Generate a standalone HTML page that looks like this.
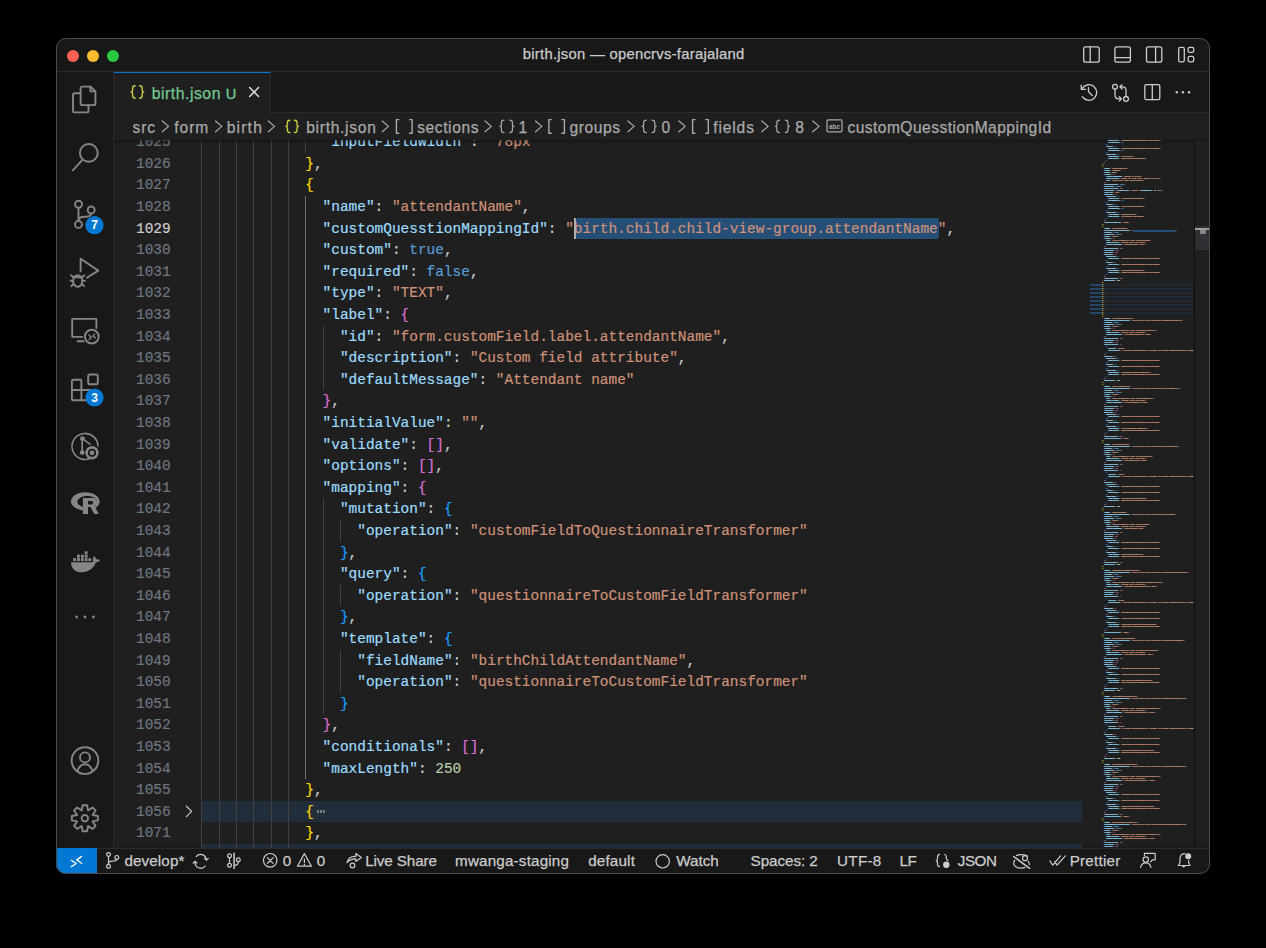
<!DOCTYPE html>
<html><head><meta charset="utf-8">
<style>
*{box-sizing:border-box;margin:0;padding:0}
html,body{width:1266px;height:948px;background:#000;overflow:hidden}
body{position:relative;font-family:"Liberation Sans",sans-serif}
.abs{position:absolute}
#win{position:absolute;left:56px;top:38px;width:1154px;height:836px;background:#181818;border-radius:10px;overflow:hidden;}
#winborder{position:absolute;left:56px;top:38px;width:1154px;height:836px;border-radius:10px;border:1px solid #4b4b4b;pointer-events:none}
#title{position:absolute;left:0;top:0;width:1154px;height:33.5px;background:#181818;border-bottom:1px solid #2b2b2b}
.tl{position:absolute;top:11.8px;width:12.4px;height:12.4px;border-radius:50%}
#act{position:absolute;left:0;top:33.5px;width:57.5px;height:776px;background:#181818;border-right:1px solid #2b2b2b}
#tabs{position:absolute;left:57.5px;top:33.5px;width:1096.5px;height:41.5px;background:#181818;border-bottom:1px solid #2b2b2b}
#tab{position:absolute;left:0;top:0;width:157.5px;height:41.5px;background:#1f1f1f;border-right:1px solid #2b2b2b;border-top:1.3px solid #0078d4}
#editor{position:absolute;left:57.5px;top:75px;width:1096.5px;height:734px;background:#1f1f1f}
#status{position:absolute;left:0;top:809.5px;width:1154px;height:26.5px;background:#181818;border-top:1px solid #2b2b2b}
#page{position:absolute;left:0;top:0;width:1266px;height:948px}
.ln{position:absolute;height:21.6px;line-height:22.6px;-webkit-text-stroke:0.2px currentColor;font-family:"Liberation Mono",monospace;font-size:14.45px;white-space:pre;color:#ccc}
.num{position:absolute;left:120px;width:50.7px;text-align:right;height:21.6px;line-height:22.6px;-webkit-text-stroke:0.2px currentColor;font-family:"Liberation Mono",monospace;font-size:14.45px;color:#6e7681}
.num.act{color:#cccccc}
.g{position:absolute;width:1px;height:21.6px;background:#404040}
.ga{background:#707070}
.fold{position:absolute;left:201.2px;width:881px;height:21.6px;background:#212d3a}
#clip{position:absolute;left:113.5px;top:140.4px;width:1096px;height:707.4px;overflow:hidden}
#clipin{position:absolute;left:-113.5px;top:-140.4px;width:1266px;height:948px}
svg{overflow:visible}
</style></head><body>
<div id="win">
  <div id="title">
    <div class="tl" style="left:10.8px;background:#ff5f57"></div>
    <div class="tl" style="left:30.8px;background:#febc2e"></div>
    <div class="tl" style="left:50.8px;background:#28c840"></div>
  </div>
  <div id="act"></div>
  <div id="tabs"><div id="tab"></div></div>
  <div id="editor"></div>
  <div id="status"></div>
</div>
<div id="page">
  <div id="clip"><div id="clipin">
<div class="fold" style="top:800.8px"></div>
<div class="fold" style="top:844.0px"></div>
<div class="g" style="top:131.2px;left:201.2px"></div>
<div class="g" style="top:131.2px;left:218.5px"></div>
<div class="g" style="top:131.2px;left:235.9px"></div>
<div class="g" style="top:131.2px;left:253.2px"></div>
<div class="g" style="top:131.2px;left:270.6px"></div>
<div class="g" style="top:131.2px;left:287.9px"></div>
<div class="g" style="top:131.2px;left:305.2px"></div>
<div class="g" style="top:152.8px;left:201.2px"></div>
<div class="g" style="top:152.8px;left:218.5px"></div>
<div class="g" style="top:152.8px;left:235.9px"></div>
<div class="g" style="top:152.8px;left:253.2px"></div>
<div class="g" style="top:152.8px;left:270.6px"></div>
<div class="g" style="top:152.8px;left:287.9px"></div>
<div class="g" style="top:174.4px;left:201.2px"></div>
<div class="g" style="top:174.4px;left:218.5px"></div>
<div class="g" style="top:174.4px;left:235.9px"></div>
<div class="g" style="top:174.4px;left:253.2px"></div>
<div class="g" style="top:174.4px;left:270.6px"></div>
<div class="g" style="top:174.4px;left:287.9px"></div>
<div class="g" style="top:196.0px;left:201.2px"></div>
<div class="g" style="top:196.0px;left:218.5px"></div>
<div class="g" style="top:196.0px;left:235.9px"></div>
<div class="g" style="top:196.0px;left:253.2px"></div>
<div class="g" style="top:196.0px;left:270.6px"></div>
<div class="g" style="top:196.0px;left:287.9px"></div>
<div class="g ga" style="top:196.0px;left:305.2px"></div>
<div class="g" style="top:217.6px;left:201.2px"></div>
<div class="g" style="top:217.6px;left:218.5px"></div>
<div class="g" style="top:217.6px;left:235.9px"></div>
<div class="g" style="top:217.6px;left:253.2px"></div>
<div class="g" style="top:217.6px;left:270.6px"></div>
<div class="g" style="top:217.6px;left:287.9px"></div>
<div class="g ga" style="top:217.6px;left:305.2px"></div>
<div class="g" style="top:239.2px;left:201.2px"></div>
<div class="g" style="top:239.2px;left:218.5px"></div>
<div class="g" style="top:239.2px;left:235.9px"></div>
<div class="g" style="top:239.2px;left:253.2px"></div>
<div class="g" style="top:239.2px;left:270.6px"></div>
<div class="g" style="top:239.2px;left:287.9px"></div>
<div class="g ga" style="top:239.2px;left:305.2px"></div>
<div class="g" style="top:260.8px;left:201.2px"></div>
<div class="g" style="top:260.8px;left:218.5px"></div>
<div class="g" style="top:260.8px;left:235.9px"></div>
<div class="g" style="top:260.8px;left:253.2px"></div>
<div class="g" style="top:260.8px;left:270.6px"></div>
<div class="g" style="top:260.8px;left:287.9px"></div>
<div class="g ga" style="top:260.8px;left:305.2px"></div>
<div class="g" style="top:282.4px;left:201.2px"></div>
<div class="g" style="top:282.4px;left:218.5px"></div>
<div class="g" style="top:282.4px;left:235.9px"></div>
<div class="g" style="top:282.4px;left:253.2px"></div>
<div class="g" style="top:282.4px;left:270.6px"></div>
<div class="g" style="top:282.4px;left:287.9px"></div>
<div class="g ga" style="top:282.4px;left:305.2px"></div>
<div class="g" style="top:304.0px;left:201.2px"></div>
<div class="g" style="top:304.0px;left:218.5px"></div>
<div class="g" style="top:304.0px;left:235.9px"></div>
<div class="g" style="top:304.0px;left:253.2px"></div>
<div class="g" style="top:304.0px;left:270.6px"></div>
<div class="g" style="top:304.0px;left:287.9px"></div>
<div class="g ga" style="top:304.0px;left:305.2px"></div>
<div class="g" style="top:325.6px;left:201.2px"></div>
<div class="g" style="top:325.6px;left:218.5px"></div>
<div class="g" style="top:325.6px;left:235.9px"></div>
<div class="g" style="top:325.6px;left:253.2px"></div>
<div class="g" style="top:325.6px;left:270.6px"></div>
<div class="g" style="top:325.6px;left:287.9px"></div>
<div class="g ga" style="top:325.6px;left:305.2px"></div>
<div class="g" style="top:325.6px;left:322.6px"></div>
<div class="g" style="top:347.2px;left:201.2px"></div>
<div class="g" style="top:347.2px;left:218.5px"></div>
<div class="g" style="top:347.2px;left:235.9px"></div>
<div class="g" style="top:347.2px;left:253.2px"></div>
<div class="g" style="top:347.2px;left:270.6px"></div>
<div class="g" style="top:347.2px;left:287.9px"></div>
<div class="g ga" style="top:347.2px;left:305.2px"></div>
<div class="g" style="top:347.2px;left:322.6px"></div>
<div class="g" style="top:368.8px;left:201.2px"></div>
<div class="g" style="top:368.8px;left:218.5px"></div>
<div class="g" style="top:368.8px;left:235.9px"></div>
<div class="g" style="top:368.8px;left:253.2px"></div>
<div class="g" style="top:368.8px;left:270.6px"></div>
<div class="g" style="top:368.8px;left:287.9px"></div>
<div class="g ga" style="top:368.8px;left:305.2px"></div>
<div class="g" style="top:368.8px;left:322.6px"></div>
<div class="g" style="top:390.4px;left:201.2px"></div>
<div class="g" style="top:390.4px;left:218.5px"></div>
<div class="g" style="top:390.4px;left:235.9px"></div>
<div class="g" style="top:390.4px;left:253.2px"></div>
<div class="g" style="top:390.4px;left:270.6px"></div>
<div class="g" style="top:390.4px;left:287.9px"></div>
<div class="g ga" style="top:390.4px;left:305.2px"></div>
<div class="g" style="top:412.0px;left:201.2px"></div>
<div class="g" style="top:412.0px;left:218.5px"></div>
<div class="g" style="top:412.0px;left:235.9px"></div>
<div class="g" style="top:412.0px;left:253.2px"></div>
<div class="g" style="top:412.0px;left:270.6px"></div>
<div class="g" style="top:412.0px;left:287.9px"></div>
<div class="g ga" style="top:412.0px;left:305.2px"></div>
<div class="g" style="top:433.6px;left:201.2px"></div>
<div class="g" style="top:433.6px;left:218.5px"></div>
<div class="g" style="top:433.6px;left:235.9px"></div>
<div class="g" style="top:433.6px;left:253.2px"></div>
<div class="g" style="top:433.6px;left:270.6px"></div>
<div class="g" style="top:433.6px;left:287.9px"></div>
<div class="g ga" style="top:433.6px;left:305.2px"></div>
<div class="g" style="top:455.2px;left:201.2px"></div>
<div class="g" style="top:455.2px;left:218.5px"></div>
<div class="g" style="top:455.2px;left:235.9px"></div>
<div class="g" style="top:455.2px;left:253.2px"></div>
<div class="g" style="top:455.2px;left:270.6px"></div>
<div class="g" style="top:455.2px;left:287.9px"></div>
<div class="g ga" style="top:455.2px;left:305.2px"></div>
<div class="g" style="top:476.8px;left:201.2px"></div>
<div class="g" style="top:476.8px;left:218.5px"></div>
<div class="g" style="top:476.8px;left:235.9px"></div>
<div class="g" style="top:476.8px;left:253.2px"></div>
<div class="g" style="top:476.8px;left:270.6px"></div>
<div class="g" style="top:476.8px;left:287.9px"></div>
<div class="g ga" style="top:476.8px;left:305.2px"></div>
<div class="g" style="top:498.4px;left:201.2px"></div>
<div class="g" style="top:498.4px;left:218.5px"></div>
<div class="g" style="top:498.4px;left:235.9px"></div>
<div class="g" style="top:498.4px;left:253.2px"></div>
<div class="g" style="top:498.4px;left:270.6px"></div>
<div class="g" style="top:498.4px;left:287.9px"></div>
<div class="g ga" style="top:498.4px;left:305.2px"></div>
<div class="g" style="top:498.4px;left:322.6px"></div>
<div class="g" style="top:520.0px;left:201.2px"></div>
<div class="g" style="top:520.0px;left:218.5px"></div>
<div class="g" style="top:520.0px;left:235.9px"></div>
<div class="g" style="top:520.0px;left:253.2px"></div>
<div class="g" style="top:520.0px;left:270.6px"></div>
<div class="g" style="top:520.0px;left:287.9px"></div>
<div class="g ga" style="top:520.0px;left:305.2px"></div>
<div class="g" style="top:520.0px;left:322.6px"></div>
<div class="g" style="top:520.0px;left:339.9px"></div>
<div class="g" style="top:541.6px;left:201.2px"></div>
<div class="g" style="top:541.6px;left:218.5px"></div>
<div class="g" style="top:541.6px;left:235.9px"></div>
<div class="g" style="top:541.6px;left:253.2px"></div>
<div class="g" style="top:541.6px;left:270.6px"></div>
<div class="g" style="top:541.6px;left:287.9px"></div>
<div class="g ga" style="top:541.6px;left:305.2px"></div>
<div class="g" style="top:541.6px;left:322.6px"></div>
<div class="g" style="top:563.2px;left:201.2px"></div>
<div class="g" style="top:563.2px;left:218.5px"></div>
<div class="g" style="top:563.2px;left:235.9px"></div>
<div class="g" style="top:563.2px;left:253.2px"></div>
<div class="g" style="top:563.2px;left:270.6px"></div>
<div class="g" style="top:563.2px;left:287.9px"></div>
<div class="g ga" style="top:563.2px;left:305.2px"></div>
<div class="g" style="top:563.2px;left:322.6px"></div>
<div class="g" style="top:584.8px;left:201.2px"></div>
<div class="g" style="top:584.8px;left:218.5px"></div>
<div class="g" style="top:584.8px;left:235.9px"></div>
<div class="g" style="top:584.8px;left:253.2px"></div>
<div class="g" style="top:584.8px;left:270.6px"></div>
<div class="g" style="top:584.8px;left:287.9px"></div>
<div class="g ga" style="top:584.8px;left:305.2px"></div>
<div class="g" style="top:584.8px;left:322.6px"></div>
<div class="g" style="top:584.8px;left:339.9px"></div>
<div class="g" style="top:606.4px;left:201.2px"></div>
<div class="g" style="top:606.4px;left:218.5px"></div>
<div class="g" style="top:606.4px;left:235.9px"></div>
<div class="g" style="top:606.4px;left:253.2px"></div>
<div class="g" style="top:606.4px;left:270.6px"></div>
<div class="g" style="top:606.4px;left:287.9px"></div>
<div class="g ga" style="top:606.4px;left:305.2px"></div>
<div class="g" style="top:606.4px;left:322.6px"></div>
<div class="g" style="top:628.0px;left:201.2px"></div>
<div class="g" style="top:628.0px;left:218.5px"></div>
<div class="g" style="top:628.0px;left:235.9px"></div>
<div class="g" style="top:628.0px;left:253.2px"></div>
<div class="g" style="top:628.0px;left:270.6px"></div>
<div class="g" style="top:628.0px;left:287.9px"></div>
<div class="g ga" style="top:628.0px;left:305.2px"></div>
<div class="g" style="top:628.0px;left:322.6px"></div>
<div class="g" style="top:649.6px;left:201.2px"></div>
<div class="g" style="top:649.6px;left:218.5px"></div>
<div class="g" style="top:649.6px;left:235.9px"></div>
<div class="g" style="top:649.6px;left:253.2px"></div>
<div class="g" style="top:649.6px;left:270.6px"></div>
<div class="g" style="top:649.6px;left:287.9px"></div>
<div class="g ga" style="top:649.6px;left:305.2px"></div>
<div class="g" style="top:649.6px;left:322.6px"></div>
<div class="g" style="top:649.6px;left:339.9px"></div>
<div class="g" style="top:671.2px;left:201.2px"></div>
<div class="g" style="top:671.2px;left:218.5px"></div>
<div class="g" style="top:671.2px;left:235.9px"></div>
<div class="g" style="top:671.2px;left:253.2px"></div>
<div class="g" style="top:671.2px;left:270.6px"></div>
<div class="g" style="top:671.2px;left:287.9px"></div>
<div class="g ga" style="top:671.2px;left:305.2px"></div>
<div class="g" style="top:671.2px;left:322.6px"></div>
<div class="g" style="top:671.2px;left:339.9px"></div>
<div class="g" style="top:692.8px;left:201.2px"></div>
<div class="g" style="top:692.8px;left:218.5px"></div>
<div class="g" style="top:692.8px;left:235.9px"></div>
<div class="g" style="top:692.8px;left:253.2px"></div>
<div class="g" style="top:692.8px;left:270.6px"></div>
<div class="g" style="top:692.8px;left:287.9px"></div>
<div class="g ga" style="top:692.8px;left:305.2px"></div>
<div class="g" style="top:692.8px;left:322.6px"></div>
<div class="g" style="top:714.4px;left:201.2px"></div>
<div class="g" style="top:714.4px;left:218.5px"></div>
<div class="g" style="top:714.4px;left:235.9px"></div>
<div class="g" style="top:714.4px;left:253.2px"></div>
<div class="g" style="top:714.4px;left:270.6px"></div>
<div class="g" style="top:714.4px;left:287.9px"></div>
<div class="g ga" style="top:714.4px;left:305.2px"></div>
<div class="g" style="top:736.0px;left:201.2px"></div>
<div class="g" style="top:736.0px;left:218.5px"></div>
<div class="g" style="top:736.0px;left:235.9px"></div>
<div class="g" style="top:736.0px;left:253.2px"></div>
<div class="g" style="top:736.0px;left:270.6px"></div>
<div class="g" style="top:736.0px;left:287.9px"></div>
<div class="g ga" style="top:736.0px;left:305.2px"></div>
<div class="g" style="top:757.6px;left:201.2px"></div>
<div class="g" style="top:757.6px;left:218.5px"></div>
<div class="g" style="top:757.6px;left:235.9px"></div>
<div class="g" style="top:757.6px;left:253.2px"></div>
<div class="g" style="top:757.6px;left:270.6px"></div>
<div class="g" style="top:757.6px;left:287.9px"></div>
<div class="g ga" style="top:757.6px;left:305.2px"></div>
<div class="g" style="top:779.2px;left:201.2px"></div>
<div class="g" style="top:779.2px;left:218.5px"></div>
<div class="g" style="top:779.2px;left:235.9px"></div>
<div class="g" style="top:779.2px;left:253.2px"></div>
<div class="g" style="top:779.2px;left:270.6px"></div>
<div class="g" style="top:779.2px;left:287.9px"></div>
<div class="g" style="top:800.8px;left:201.2px"></div>
<div class="g" style="top:800.8px;left:218.5px"></div>
<div class="g" style="top:800.8px;left:235.9px"></div>
<div class="g" style="top:800.8px;left:253.2px"></div>
<div class="g" style="top:800.8px;left:270.6px"></div>
<div class="g" style="top:800.8px;left:287.9px"></div>
<div class="g" style="top:822.4px;left:201.2px"></div>
<div class="g" style="top:822.4px;left:218.5px"></div>
<div class="g" style="top:822.4px;left:235.9px"></div>
<div class="g" style="top:822.4px;left:253.2px"></div>
<div class="g" style="top:822.4px;left:270.6px"></div>
<div class="g" style="top:822.4px;left:287.9px"></div>
<div class="g" style="top:844.0px;left:201.2px"></div>
<div class="g" style="top:844.0px;left:218.5px"></div>
<div class="g" style="top:844.0px;left:235.9px"></div>
<div class="g" style="top:844.0px;left:253.2px"></div>
<div class="g" style="top:844.0px;left:270.6px"></div>
<div class="g" style="top:844.0px;left:287.9px"></div>
  <div class="abs" style="left:574.8px;top:217.6px;width:364.2px;height:21.6px;background:#264f78;border-radius:3px"></div>
<div class="num" style="top:131.2px">1025</div>
<div class="num" style="top:152.8px">1026</div>
<div class="num" style="top:174.4px">1027</div>
<div class="num" style="top:196.0px">1028</div>
<div class="num act" style="top:217.6px">1029</div>
<div class="num" style="top:239.2px">1030</div>
<div class="num" style="top:260.8px">1031</div>
<div class="num" style="top:282.4px">1032</div>
<div class="num" style="top:304.0px">1033</div>
<div class="num" style="top:325.6px">1034</div>
<div class="num" style="top:347.2px">1035</div>
<div class="num" style="top:368.8px">1036</div>
<div class="num" style="top:390.4px">1037</div>
<div class="num" style="top:412.0px">1038</div>
<div class="num" style="top:433.6px">1039</div>
<div class="num" style="top:455.2px">1040</div>
<div class="num" style="top:476.8px">1041</div>
<div class="num" style="top:498.4px">1042</div>
<div class="num" style="top:520.0px">1043</div>
<div class="num" style="top:541.6px">1044</div>
<div class="num" style="top:563.2px">1045</div>
<div class="num" style="top:584.8px">1046</div>
<div class="num" style="top:606.4px">1047</div>
<div class="num" style="top:628.0px">1048</div>
<div class="num" style="top:649.6px">1049</div>
<div class="num" style="top:671.2px">1050</div>
<div class="num" style="top:692.8px">1051</div>
<div class="num" style="top:714.4px">1052</div>
<div class="num" style="top:736.0px">1053</div>
<div class="num" style="top:757.6px">1054</div>
<div class="num" style="top:779.2px">1055</div>
<div class="num" style="top:800.8px">1056</div>
<div class="num" style="top:822.4px">1071</div>
<div class="num" style="top:844.0px">1072</div>
<div class="ln" style="top:131.2px;left:322.58px"><span style="color:#9cdcfe">&quot;inputFieldWidth&quot;</span><span style="color:#cccccc">: </span><span style="color:#ce9178">&quot;78px&quot;</span></div>
<div class="ln" style="top:152.8px;left:305.24px"><span style="color:#ffd700">}</span><span style="color:#cccccc">,</span></div>
<div class="ln" style="top:174.4px;left:305.24px"><span style="color:#ffd700">{</span></div>
<div class="ln" style="top:196.0px;left:322.58px"><span style="color:#9cdcfe">&quot;name&quot;</span><span style="color:#cccccc">: </span><span style="color:#ce9178">&quot;attendantName&quot;</span><span style="color:#cccccc">,</span></div>
<div class="ln" style="top:217.6px;left:322.58px"><span style="color:#9cdcfe">&quot;customQuesstionMappingId&quot;</span><span style="color:#cccccc">: </span><span style="color:#ce9178">&quot;birth.child.child-view-group.attendantName&quot;</span><span style="color:#cccccc">,</span></div>
<div class="ln" style="top:239.2px;left:322.58px"><span style="color:#9cdcfe">&quot;custom&quot;</span><span style="color:#cccccc">: </span><span style="color:#569cd6">true</span><span style="color:#cccccc">,</span></div>
<div class="ln" style="top:260.8px;left:322.58px"><span style="color:#9cdcfe">&quot;required&quot;</span><span style="color:#cccccc">: </span><span style="color:#569cd6">false</span><span style="color:#cccccc">,</span></div>
<div class="ln" style="top:282.4px;left:322.58px"><span style="color:#9cdcfe">&quot;type&quot;</span><span style="color:#cccccc">: </span><span style="color:#ce9178">&quot;TEXT&quot;</span><span style="color:#cccccc">,</span></div>
<div class="ln" style="top:304.0px;left:322.58px"><span style="color:#9cdcfe">&quot;label&quot;</span><span style="color:#cccccc">: </span><span style="color:#da70d6">{</span></div>
<div class="ln" style="top:325.6px;left:339.92px"><span style="color:#9cdcfe">&quot;id&quot;</span><span style="color:#cccccc">: </span><span style="color:#ce9178">&quot;form.customField.label.attendantName&quot;</span><span style="color:#cccccc">,</span></div>
<div class="ln" style="top:347.2px;left:339.92px"><span style="color:#9cdcfe">&quot;description&quot;</span><span style="color:#cccccc">: </span><span style="color:#ce9178">&quot;Custom field attribute&quot;</span><span style="color:#cccccc">,</span></div>
<div class="ln" style="top:368.8px;left:339.92px"><span style="color:#9cdcfe">&quot;defaultMessage&quot;</span><span style="color:#cccccc">: </span><span style="color:#ce9178">&quot;Attendant name&quot;</span></div>
<div class="ln" style="top:390.4px;left:322.58px"><span style="color:#da70d6">}</span><span style="color:#cccccc">,</span></div>
<div class="ln" style="top:412.0px;left:322.58px"><span style="color:#9cdcfe">&quot;initialValue&quot;</span><span style="color:#cccccc">: </span><span style="color:#ce9178">&quot;&quot;</span><span style="color:#cccccc">,</span></div>
<div class="ln" style="top:433.6px;left:322.58px"><span style="color:#9cdcfe">&quot;validate&quot;</span><span style="color:#cccccc">: </span><span style="color:#da70d6">[]</span><span style="color:#cccccc">,</span></div>
<div class="ln" style="top:455.2px;left:322.58px"><span style="color:#9cdcfe">&quot;options&quot;</span><span style="color:#cccccc">: </span><span style="color:#da70d6">[]</span><span style="color:#cccccc">,</span></div>
<div class="ln" style="top:476.8px;left:322.58px"><span style="color:#9cdcfe">&quot;mapping&quot;</span><span style="color:#cccccc">: </span><span style="color:#da70d6">{</span></div>
<div class="ln" style="top:498.4px;left:339.92px"><span style="color:#9cdcfe">&quot;mutation&quot;</span><span style="color:#cccccc">: </span><span style="color:#179fff">{</span></div>
<div class="ln" style="top:520.0px;left:357.26px"><span style="color:#9cdcfe">&quot;operation&quot;</span><span style="color:#cccccc">: </span><span style="color:#ce9178">&quot;customFieldToQuestionnaireTransformer&quot;</span></div>
<div class="ln" style="top:541.6px;left:339.92px"><span style="color:#179fff">}</span><span style="color:#cccccc">,</span></div>
<div class="ln" style="top:563.2px;left:339.92px"><span style="color:#9cdcfe">&quot;query&quot;</span><span style="color:#cccccc">: </span><span style="color:#179fff">{</span></div>
<div class="ln" style="top:584.8px;left:357.26px"><span style="color:#9cdcfe">&quot;operation&quot;</span><span style="color:#cccccc">: </span><span style="color:#ce9178">&quot;questionnaireToCustomFieldTransformer&quot;</span></div>
<div class="ln" style="top:606.4px;left:339.92px"><span style="color:#179fff">}</span><span style="color:#cccccc">,</span></div>
<div class="ln" style="top:628.0px;left:339.92px"><span style="color:#9cdcfe">&quot;template&quot;</span><span style="color:#cccccc">: </span><span style="color:#179fff">{</span></div>
<div class="ln" style="top:649.6px;left:357.26px"><span style="color:#9cdcfe">&quot;fieldName&quot;</span><span style="color:#cccccc">: </span><span style="color:#ce9178">&quot;birthChildAttendantName&quot;</span><span style="color:#cccccc">,</span></div>
<div class="ln" style="top:671.2px;left:357.26px"><span style="color:#9cdcfe">&quot;operation&quot;</span><span style="color:#cccccc">: </span><span style="color:#ce9178">&quot;questionnaireToCustomFieldTransformer&quot;</span></div>
<div class="ln" style="top:692.8px;left:339.92px"><span style="color:#179fff">}</span></div>
<div class="ln" style="top:714.4px;left:322.58px"><span style="color:#da70d6">}</span><span style="color:#cccccc">,</span></div>
<div class="ln" style="top:736.0px;left:322.58px"><span style="color:#9cdcfe">&quot;conditionals&quot;</span><span style="color:#cccccc">: </span><span style="color:#da70d6">[]</span><span style="color:#cccccc">,</span></div>
<div class="ln" style="top:757.6px;left:322.58px"><span style="color:#9cdcfe">&quot;maxLength&quot;</span><span style="color:#cccccc">: </span><span style="color:#b5cea8">250</span></div>
<div class="ln" style="top:779.2px;left:305.24px"><span style="color:#ffd700">}</span><span style="color:#cccccc">,</span></div>
<div class="abs" style="left:316.9px;top:810.0px;width:2.1px;height:2.9px;background:#7c7c7c"></div>
<div class="abs" style="left:319.9px;top:810.0px;width:2.1px;height:2.9px;background:#7c7c7c"></div>
<div class="abs" style="left:322.9px;top:810.0px;width:2.1px;height:2.9px;background:#7c7c7c"></div>
<div class="ln" style="top:800.8px;left:305.24px"><span style="color:#ffd700">{</span></div>
<div class="ln" style="top:822.4px;left:305.24px"><span style="color:#ffd700">}</span><span style="color:#cccccc">,</span></div>
<div class="abs" style="left:316.9px;top:853.2px;width:2.1px;height:2.9px;background:#7c7c7c"></div>
<div class="abs" style="left:319.9px;top:853.2px;width:2.1px;height:2.9px;background:#7c7c7c"></div>
<div class="abs" style="left:322.9px;top:853.2px;width:2.1px;height:2.9px;background:#7c7c7c"></div>
<div class="ln" style="top:844.0px;left:305.24px"><span style="color:#ffd700">{</span></div>
  <div class="abs" style="left:574px;top:217.6px;width:1.6px;height:21.6px;background:#aeafad"></div>
  </div></div>
  <div class="abs" style="left:113.5px;top:140.4px;width:1081px;height:4px;background:linear-gradient(rgba(0,0,0,0.3),rgba(0,0,0,0))"></div>
<div style="position:absolute;left:1082px;top:140.4px;width:112px;height:707.4px;overflow:hidden"><div style="position:absolute;left:-1082px;top:-140.4px;width:1266px;height:948px"><div class="abs" style="left:1090px;top:283.6px;width:12.5px;height:2px;background:#244468"></div><div class="abs" style="left:1102.5px;top:283.6px;width:90.5px;height:2px;background:#1f2934"></div>
<div class="abs" style="left:1090px;top:287.6px;width:12.5px;height:2px;background:#244468"></div><div class="abs" style="left:1102.5px;top:287.6px;width:90.5px;height:2px;background:#1f2934"></div>
<div class="abs" style="left:1090px;top:291.6px;width:12.5px;height:2px;background:#244468"></div><div class="abs" style="left:1102.5px;top:291.6px;width:90.5px;height:2px;background:#1f2934"></div>
<div class="abs" style="left:1090px;top:295.6px;width:12.5px;height:2px;background:#244468"></div><div class="abs" style="left:1102.5px;top:295.6px;width:90.5px;height:2px;background:#1f2934"></div>
<div class="abs" style="left:1090px;top:299.6px;width:12.5px;height:2px;background:#244468"></div><div class="abs" style="left:1102.5px;top:299.6px;width:90.5px;height:2px;background:#1f2934"></div>
<div class="abs" style="left:1090px;top:303.6px;width:12.5px;height:2px;background:#244468"></div><div class="abs" style="left:1102.5px;top:303.6px;width:90.5px;height:2px;background:#1f2934"></div>
<div class="abs" style="left:1090px;top:307.6px;width:12.5px;height:2px;background:#244468"></div><div class="abs" style="left:1102.5px;top:307.6px;width:90.5px;height:2px;background:#1f2934"></div>
<div class="abs" style="left:1090px;top:311.6px;width:12.5px;height:2px;background:#244468"></div><div class="abs" style="left:1102.5px;top:311.6px;width:90.5px;height:2px;background:#1f2934"></div><div class="abs" style="left:1089.8px;top:139.60px;width:1040px;height:7100px;transform:scale(0.1);transform-origin:0 0;font-family:'Liberation Mono',monospace;font-size:16.67px;line-height:20px;white-space:pre;-webkit-text-stroke:2px currentColor;overflow:hidden">                  <span style="color:#9cdcfe">&quot;operation&quot;</span><span style="color:#cccccc">:</span> <span style="color:#ce9178">&quot;customFieldToQuestionnaireTransformer&quot;</span><span style="color:#cccccc">,</span>
                  <span style="color:#9cdcfe">&quot;parameters&quot;</span><span style="color:#cccccc">:</span> <span style="color:#179fff">[</span><span style="color:#179fff">]</span>
                <span style="color:#179fff">}</span><span style="color:#cccccc">,</span>
                <span style="color:#9cdcfe">&quot;query&quot;</span><span style="color:#cccccc">:</span> <span style="color:#179fff">{</span>
                  <span style="color:#9cdcfe">&quot;operation&quot;</span><span style="color:#cccccc">:</span> <span style="color:#ce9178">&quot;questionnaireToCustomFieldTransformer&quot;</span><span style="color:#cccccc">,</span>
                  <span style="color:#9cdcfe">&quot;parameters&quot;</span><span style="color:#cccccc">:</span> <span style="color:#179fff">[</span><span style="color:#179fff">]</span>
                <span style="color:#179fff">}</span><span style="color:#cccccc">,</span>
                <span style="color:#9cdcfe">&quot;template&quot;</span><span style="color:#cccccc">:</span> <span style="color:#179fff">{</span>
                  <span style="color:#9cdcfe">&quot;fieldName&quot;</span><span style="color:#cccccc">:</span> <span style="color:#ce9178">&quot;birthChild&quot;</span><span style="color:#cccccc">,</span>
                  <span style="color:#9cdcfe">&quot;operation&quot;</span><span style="color:#cccccc">:</span> <span style="color:#ce9178">&quot;questionnaireToTemplate&quot;</span>
                <span style="color:#179fff">}</span>
              <span style="color:#da70d6">}</span>
            <span style="color:#ffd700">}</span><span style="color:#cccccc">,</span>
            <span style="color:#ffd700">{</span>
              <span style="color:#9cdcfe">&quot;name&quot;</span><span style="color:#cccccc">:</span> <span style="color:#ce9178">&quot;weightAtBirth&quot;</span><span style="color:#cccccc">,</span>
              <span style="color:#9cdcfe">&quot;type&quot;</span><span style="color:#cccccc">:</span> <span style="color:#ce9178">&quot;NUMBER&quot;</span><span style="color:#cccccc">,</span>
              <span style="color:#9cdcfe">&quot;step&quot;</span><span style="color:#cccccc">:</span> <span style="color:#b5cea8">0</span><span style="color:#cccccc">.01,</span>
              <span style="color:#9cdcfe">&quot;label&quot;</span><span style="color:#cccccc">:</span> <span style="color:#da70d6">{</span>
                <span style="color:#9cdcfe">&quot;defaultMessage&quot;</span><span style="color:#cccccc">:</span> <span style="color:#ce9178">&quot;Weight at birth&quot;</span><span style="color:#cccccc">,</span>
                <span style="color:#9cdcfe">&quot;description&quot;</span><span style="color:#cccccc">:</span> <span style="color:#ce9178">&quot;Label for form field: Weight at birth&quot;</span><span style="color:#cccccc">,</span>
                <span style="color:#9cdcfe">&quot;id&quot;</span><span style="color:#cccccc">:</span> <span style="color:#ce9178">&quot;form.field.label.weightAtBirth&quot;</span>
              <span style="color:#da70d6">}</span><span style="color:#cccccc">,</span>
              <span style="color:#9cdcfe">&quot;previewGroup&quot;</span><span style="color:#cccccc">:</span> <span style="color:#569cd6">true</span><span style="color:#cccccc">,</span>
              <span style="color:#9cdcfe">&quot;required&quot;</span><span style="color:#cccccc">:</span> <span style="color:#569cd6">false</span><span style="color:#cccccc">,</span>
              <span style="color:#9cdcfe">&quot;initialValue&quot;</span><span style="color:#cccccc">:</span> <span style="color:#ce9178">&quot;&quot;</span><span style="color:#cccccc">,</span>
              <span style="color:#9cdcfe">&quot;validate&quot;</span><span style="color:#cccccc">:</span> <span style="color:#da70d6">[</span><span style="color:#da70d6">{</span><span style="color:#9cdcfe">&quot;operation&quot;</span><span style="color:#cccccc">:</span> <span style="color:#ce9178">&quot;range&quot;</span><span style="color:#cccccc">,</span> <span style="color:#9cdcfe">&quot;parameters&quot;</span><span style="color:#cccccc">:</span> <span style="color:#da70d6">[</span><span style="color:#b5cea8">0</span><span style="color:#cccccc">,</span> <span style="color:#b5cea8">6</span><span style="color:#da70d6">]</span><span style="color:#da70d6">}</span><span style="color:#da70d6">]</span><span style="color:#cccccc">,</span>
              <span style="color:#9cdcfe">&quot;postfix&quot;</span><span style="color:#cccccc">:</span> <span style="color:#ce9178">&quot;Kg&quot;</span><span style="color:#cccccc">,</span>
              <span style="color:#9cdcfe">&quot;mapping&quot;</span><span style="color:#cccccc">:</span> <span style="color:#da70d6">{</span>
                <span style="color:#9cdcfe">&quot;mutation&quot;</span><span style="color:#cccccc">:</span> <span style="color:#179fff">{</span>
                  <span style="color:#9cdcfe">&quot;operation&quot;</span><span style="color:#cccccc">:</span> <span style="color:#ce9178">&quot;fieldValueTransformer&quot;</span><span style="color:#cccccc">,</span>
                  <span style="color:#9cdcfe">&quot;parameters&quot;</span><span style="color:#cccccc">:</span> <span style="color:#179fff">[</span><span style="color:#179fff">]</span>
                <span style="color:#179fff">}</span><span style="color:#cccccc">,</span>
                <span style="color:#9cdcfe">&quot;query&quot;</span><span style="color:#cccccc">:</span> <span style="color:#179fff">{</span>
                  <span style="color:#9cdcfe">&quot;operation&quot;</span><span style="color:#cccccc">:</span> <span style="color:#ce9178">&quot;fieldValueTransformer&quot;</span><span style="color:#cccccc">,</span>
                  <span style="color:#9cdcfe">&quot;parameters&quot;</span><span style="color:#cccccc">:</span> <span style="color:#179fff">[</span><span style="color:#179fff">]</span>
                <span style="color:#179fff">}</span><span style="color:#cccccc">,</span>
                <span style="color:#9cdcfe">&quot;template&quot;</span><span style="color:#cccccc">:</span> <span style="color:#179fff">{</span>
                  <span style="color:#9cdcfe">&quot;fieldName&quot;</span><span style="color:#cccccc">:</span> <span style="color:#ce9178">&quot;weightAtBirth&quot;</span><span style="color:#cccccc">,</span>
                  <span style="color:#9cdcfe">&quot;operation&quot;</span><span style="color:#cccccc">:</span> <span style="color:#ce9178">&quot;plainInputTransformer&quot;</span>
                <span style="color:#179fff">}</span>
              <span style="color:#da70d6">}</span><span style="color:#cccccc">,</span>
              <span style="color:#9cdcfe">&quot;inputFieldWidth&quot;</span><span style="color:#cccccc">:</span> <span style="color:#ce9178">&quot;78px&quot;</span>
            <span style="color:#ffd700">}</span><span style="color:#cccccc">,</span>
            <span style="color:#ffd700">{</span>
              <span style="color:#9cdcfe">&quot;name&quot;</span><span style="color:#cccccc">:</span> <span style="color:#ce9178">&quot;attendantName&quot;</span><span style="color:#cccccc">,</span>
              <span style="color:#9cdcfe">&quot;customQuesstionMappingId&quot;</span><span style="color:#cccccc">:</span> <span style="color:#ce9178">&quot;birth.child.child-view-group.attendantName&quot;</span><span style="color:#cccccc">,</span>
              <span style="color:#9cdcfe">&quot;custom&quot;</span><span style="color:#cccccc">:</span> <span style="color:#569cd6">true</span><span style="color:#cccccc">,</span>
              <span style="color:#9cdcfe">&quot;required&quot;</span><span style="color:#cccccc">:</span> <span style="color:#569cd6">false</span><span style="color:#cccccc">,</span>
              <span style="color:#9cdcfe">&quot;type&quot;</span><span style="color:#cccccc">:</span> <span style="color:#ce9178">&quot;TEXT&quot;</span><span style="color:#cccccc">,</span>
              <span style="color:#9cdcfe">&quot;label&quot;</span><span style="color:#cccccc">:</span> <span style="color:#da70d6">{</span>
                <span style="color:#9cdcfe">&quot;id&quot;</span><span style="color:#cccccc">:</span> <span style="color:#ce9178">&quot;form.customField.label.attendantName&quot;</span><span style="color:#cccccc">,</span>
                <span style="color:#9cdcfe">&quot;description&quot;</span><span style="color:#cccccc">:</span> <span style="color:#ce9178">&quot;Custom field attribute&quot;</span><span style="color:#cccccc">,</span>
                <span style="color:#9cdcfe">&quot;defaultMessage&quot;</span><span style="color:#cccccc">:</span> <span style="color:#ce9178">&quot;attendantName label&quot;</span>
              <span style="color:#da70d6">}</span><span style="color:#cccccc">,</span>
              <span style="color:#9cdcfe">&quot;initialValue&quot;</span><span style="color:#cccccc">:</span> <span style="color:#ce9178">&quot;&quot;</span><span style="color:#cccccc">,</span>
              <span style="color:#9cdcfe">&quot;validate&quot;</span><span style="color:#cccccc">:</span> <span style="color:#da70d6">[</span><span style="color:#da70d6">]</span><span style="color:#cccccc">,</span>
              <span style="color:#9cdcfe">&quot;options&quot;</span><span style="color:#cccccc">:</span> <span style="color:#da70d6">[</span><span style="color:#da70d6">]</span><span style="color:#cccccc">,</span>
              <span style="color:#9cdcfe">&quot;mapping&quot;</span><span style="color:#cccccc">:</span> <span style="color:#da70d6">{</span>
                <span style="color:#9cdcfe">&quot;mutation&quot;</span><span style="color:#cccccc">:</span> <span style="color:#179fff">{</span>
                  <span style="color:#9cdcfe">&quot;operation&quot;</span><span style="color:#cccccc">:</span> <span style="color:#ce9178">&quot;customFieldToQuestionnaireTransformer&quot;</span>
                <span style="color:#179fff">}</span><span style="color:#cccccc">,</span>
                <span style="color:#9cdcfe">&quot;query&quot;</span><span style="color:#cccccc">:</span> <span style="color:#179fff">{</span>
                  <span style="color:#9cdcfe">&quot;operation&quot;</span><span style="color:#cccccc">:</span> <span style="color:#ce9178">&quot;questionnaireToCustomFieldTransformer&quot;</span>
                <span style="color:#179fff">}</span><span style="color:#cccccc">,</span>
                <span style="color:#9cdcfe">&quot;template&quot;</span><span style="color:#cccccc">:</span> <span style="color:#179fff">{</span>
                  <span style="color:#9cdcfe">&quot;fieldName&quot;</span><span style="color:#cccccc">:</span> <span style="color:#ce9178">&quot;attendantNameTemplate&quot;</span><span style="color:#cccccc">,</span>
                  <span style="color:#9cdcfe">&quot;operation&quot;</span><span style="color:#cccccc">:</span> <span style="color:#ce9178">&quot;questionnaireToCustomFieldTransformer&quot;</span>
                <span style="color:#179fff">}</span>
              <span style="color:#da70d6">}</span><span style="color:#cccccc">,</span>
              <span style="color:#9cdcfe">&quot;conditionals&quot;</span><span style="color:#cccccc">:</span> <span style="color:#da70d6">[</span><span style="color:#da70d6">]</span><span style="color:#cccccc">,</span>
              <span style="color:#9cdcfe">&quot;maxLength&quot;</span><span style="color:#cccccc">:</span> <span style="color:#b5cea8">250</span>
            <span style="color:#ffd700">}</span><span style="color:#cccccc">,</span>
            <span style="color:#ffd700">{</span><span style="color:#8c8c8c">…</span>
            <span style="color:#ffd700">}</span><span style="color:#cccccc">,</span>
            <span style="color:#ffd700">{</span><span style="color:#8c8c8c">…</span>
            <span style="color:#ffd700">}</span><span style="color:#cccccc">,</span>
            <span style="color:#ffd700">{</span><span style="color:#8c8c8c">…</span>
            <span style="color:#ffd700">}</span><span style="color:#cccccc">,</span>
            <span style="color:#ffd700">{</span><span style="color:#8c8c8c">…</span>
            <span style="color:#ffd700">}</span><span style="color:#cccccc">,</span>
            <span style="color:#ffd700">{</span><span style="color:#8c8c8c">…</span>
            <span style="color:#ffd700">}</span><span style="color:#cccccc">,</span>
            <span style="color:#ffd700">{</span><span style="color:#8c8c8c">…</span>
            <span style="color:#ffd700">}</span><span style="color:#cccccc">,</span>
            <span style="color:#ffd700">{</span><span style="color:#8c8c8c">…</span>
            <span style="color:#ffd700">}</span><span style="color:#cccccc">,</span>
            <span style="color:#ffd700">{</span><span style="color:#8c8c8c">…</span>
            <span style="color:#ffd700">}</span><span style="color:#cccccc">,</span>
            <span style="color:#ffd700">{</span>
              <span style="color:#9cdcfe">&quot;name&quot;</span><span style="color:#cccccc">:</span> <span style="color:#ce9178">&quot;placeOfBirthDetails&quot;</span><span style="color:#cccccc">,</span>
              <span style="color:#9cdcfe">&quot;customQuesstionMappingId&quot;</span><span style="color:#cccccc">:</span> <span style="color:#ce9178">&quot;birth.child.child-view-group.placeOfBirthDetails&quot;</span><span style="color:#cccccc">,</span>
              <span style="color:#9cdcfe">&quot;custom&quot;</span><span style="color:#cccccc">:</span> <span style="color:#569cd6">true</span><span style="color:#cccccc">,</span>
              <span style="color:#9cdcfe">&quot;required&quot;</span><span style="color:#cccccc">:</span> <span style="color:#569cd6">false</span><span style="color:#cccccc">,</span>
              <span style="color:#9cdcfe">&quot;type&quot;</span><span style="color:#cccccc">:</span> <span style="color:#ce9178">&quot;TEXT&quot;</span><span style="color:#cccccc">,</span>
              <span style="color:#9cdcfe">&quot;label&quot;</span><span style="color:#cccccc">:</span> <span style="color:#da70d6">{</span>
                <span style="color:#9cdcfe">&quot;id&quot;</span><span style="color:#cccccc">:</span> <span style="color:#ce9178">&quot;form.customField.label.placeOfBirthDetails&quot;</span><span style="color:#cccccc">,</span>
                <span style="color:#9cdcfe">&quot;description&quot;</span><span style="color:#cccccc">:</span> <span style="color:#ce9178">&quot;Custom field attribute&quot;</span><span style="color:#cccccc">,</span>
                <span style="color:#9cdcfe">&quot;defaultMessage&quot;</span><span style="color:#cccccc">:</span> <span style="color:#ce9178">&quot;placeOfBirthDetails label&quot;</span>
              <span style="color:#da70d6">}</span><span style="color:#cccccc">,</span>
              <span style="color:#9cdcfe">&quot;initialValue&quot;</span><span style="color:#cccccc">:</span> <span style="color:#ce9178">&quot;&quot;</span><span style="color:#cccccc">,</span>
              <span style="color:#9cdcfe">&quot;validate&quot;</span><span style="color:#cccccc">:</span> <span style="color:#da70d6">[</span><span style="color:#da70d6">]</span><span style="color:#cccccc">,</span>
              <span style="color:#9cdcfe">&quot;options&quot;</span><span style="color:#cccccc">:</span> <span style="color:#da70d6">[</span><span style="color:#da70d6">]</span><span style="color:#cccccc">,</span>
              <span style="color:#9cdcfe">&quot;conditionals&quot;</span><span style="color:#cccccc">:</span> <span style="color:#da70d6">[</span>
                <span style="color:#179fff">{</span>
                  <span style="color:#9cdcfe">&quot;action&quot;</span><span style="color:#cccccc">:</span> <span style="color:#ce9178">&quot;hide&quot;</span><span style="color:#cccccc">,</span>
                  <span style="color:#9cdcfe">&quot;expression&quot;</span><span style="color:#cccccc">:</span> <span style="color:#ce9178">&quot;(values.attendantAtBirth!=\&quot;OTHER\&quot; &amp;&amp; values.attendantAtBirth!=\&quot;NONE\&quot;)&quot;</span>
                <span style="color:#179fff">}</span>
              <span style="color:#da70d6">]</span><span style="color:#cccccc">,</span>
              <span style="color:#9cdcfe">&quot;mapping&quot;</span><span style="color:#cccccc">:</span> <span style="color:#da70d6">{</span>
                <span style="color:#9cdcfe">&quot;mutation&quot;</span><span style="color:#cccccc">:</span> <span style="color:#179fff">{</span>
                  <span style="color:#9cdcfe">&quot;operation&quot;</span><span style="color:#cccccc">:</span> <span style="color:#ce9178">&quot;customFieldToQuestionnaireTransformer&quot;</span>
                <span style="color:#179fff">}</span><span style="color:#cccccc">,</span>
                <span style="color:#9cdcfe">&quot;query&quot;</span><span style="color:#cccccc">:</span> <span style="color:#179fff">{</span>
                  <span style="color:#9cdcfe">&quot;operation&quot;</span><span style="color:#cccccc">:</span> <span style="color:#ce9178">&quot;questionnaireToCustomFieldTransformer&quot;</span>
                <span style="color:#179fff">}</span><span style="color:#cccccc">,</span>
                <span style="color:#9cdcfe">&quot;template&quot;</span><span style="color:#cccccc">:</span> <span style="color:#179fff">{</span>
                  <span style="color:#9cdcfe">&quot;fieldName&quot;</span><span style="color:#cccccc">:</span> <span style="color:#ce9178">&quot;placeOfBirthDetailsTemplate&quot;</span><span style="color:#cccccc">,</span>
                  <span style="color:#9cdcfe">&quot;operation&quot;</span><span style="color:#cccccc">:</span> <span style="color:#ce9178">&quot;questionnaireToCustomFieldTransformer&quot;</span>
                <span style="color:#179fff">}</span>
              <span style="color:#da70d6">}</span><span style="color:#cccccc">,</span>
              <span style="color:#9cdcfe">&quot;maxLength&quot;</span><span style="color:#cccccc">:</span> <span style="color:#b5cea8">250</span>
            <span style="color:#ffd700">}</span><span style="color:#cccccc">,</span>
            <span style="color:#ffd700">{</span>
              <span style="color:#9cdcfe">&quot;name&quot;</span><span style="color:#cccccc">:</span> <span style="color:#ce9178">&quot;birthTypeDetails&quot;</span><span style="color:#cccccc">,</span>
              <span style="color:#9cdcfe">&quot;customQuesstionMappingId&quot;</span><span style="color:#cccccc">:</span> <span style="color:#ce9178">&quot;birth.child.child-view-group.birthTypeDetails&quot;</span><span style="color:#cccccc">,</span>
              <span style="color:#9cdcfe">&quot;custom&quot;</span><span style="color:#cccccc">:</span> <span style="color:#569cd6">true</span><span style="color:#cccccc">,</span>
              <span style="color:#9cdcfe">&quot;required&quot;</span><span style="color:#cccccc">:</span> <span style="color:#569cd6">false</span><span style="color:#cccccc">,</span>
              <span style="color:#9cdcfe">&quot;type&quot;</span><span style="color:#cccccc">:</span> <span style="color:#ce9178">&quot;TEXT&quot;</span><span style="color:#cccccc">,</span>
              <span style="color:#9cdcfe">&quot;label&quot;</span><span style="color:#cccccc">:</span> <span style="color:#da70d6">{</span>
                <span style="color:#9cdcfe">&quot;id&quot;</span><span style="color:#cccccc">:</span> <span style="color:#ce9178">&quot;form.customField.label.birthTypeDetails&quot;</span><span style="color:#cccccc">,</span>
                <span style="color:#9cdcfe">&quot;description&quot;</span><span style="color:#cccccc">:</span> <span style="color:#ce9178">&quot;Custom field attribute&quot;</span><span style="color:#cccccc">,</span>
                <span style="color:#9cdcfe">&quot;defaultMessage&quot;</span><span style="color:#cccccc">:</span> <span style="color:#ce9178">&quot;birthTypeDetails label&quot;</span>
              <span style="color:#da70d6">}</span><span style="color:#cccccc">,</span>
              <span style="color:#9cdcfe">&quot;initialValue&quot;</span><span style="color:#cccccc">:</span> <span style="color:#ce9178">&quot;&quot;</span><span style="color:#cccccc">,</span>
              <span style="color:#9cdcfe">&quot;validate&quot;</span><span style="color:#cccccc">:</span> <span style="color:#da70d6">[</span><span style="color:#da70d6">]</span><span style="color:#cccccc">,</span>
              <span style="color:#9cdcfe">&quot;options&quot;</span><span style="color:#cccccc">:</span> <span style="color:#da70d6">[</span><span style="color:#da70d6">]</span><span style="color:#cccccc">,</span>
              <span style="color:#9cdcfe">&quot;mapping&quot;</span><span style="color:#cccccc">:</span> <span style="color:#da70d6">{</span>
                <span style="color:#9cdcfe">&quot;mutation&quot;</span><span style="color:#cccccc">:</span> <span style="color:#179fff">{</span>
                  <span style="color:#9cdcfe">&quot;operation&quot;</span><span style="color:#cccccc">:</span> <span style="color:#ce9178">&quot;customFieldToQuestionnaireTransformer&quot;</span>
                <span style="color:#179fff">}</span><span style="color:#cccccc">,</span>
                <span style="color:#9cdcfe">&quot;query&quot;</span><span style="color:#cccccc">:</span> <span style="color:#179fff">{</span>
                  <span style="color:#9cdcfe">&quot;operation&quot;</span><span style="color:#cccccc">:</span> <span style="color:#ce9178">&quot;questionnaireToCustomFieldTransformer&quot;</span>
                <span style="color:#179fff">}</span><span style="color:#cccccc">,</span>
                <span style="color:#9cdcfe">&quot;template&quot;</span><span style="color:#cccccc">:</span> <span style="color:#179fff">{</span>
                  <span style="color:#9cdcfe">&quot;fieldName&quot;</span><span style="color:#cccccc">:</span> <span style="color:#ce9178">&quot;birthTypeDetailsTemplate&quot;</span><span style="color:#cccccc">,</span>
                  <span style="color:#9cdcfe">&quot;operation&quot;</span><span style="color:#cccccc">:</span> <span style="color:#ce9178">&quot;questionnaireToCustomFieldTransformer&quot;</span>
                <span style="color:#179fff">}</span>
              <span style="color:#da70d6">}</span><span style="color:#cccccc">,</span>
              <span style="color:#9cdcfe">&quot;conditionals&quot;</span><span style="color:#cccccc">:</span> <span style="color:#da70d6">[</span><span style="color:#da70d6">]</span><span style="color:#cccccc">,</span>
              <span style="color:#9cdcfe">&quot;inputFieldWidth&quot;</span><span style="color:#cccccc">:</span> <span style="color:#ce9178">&quot;78px&quot;</span>
            <span style="color:#ffd700">}</span><span style="color:#cccccc">,</span>
            <span style="color:#ffd700">{</span>
              <span style="color:#9cdcfe">&quot;name&quot;</span><span style="color:#cccccc">:</span> <span style="color:#ce9178">&quot;childOccupation&quot;</span><span style="color:#cccccc">,</span>
              <span style="color:#9cdcfe">&quot;customQuesstionMappingId&quot;</span><span style="color:#cccccc">:</span> <span style="color:#ce9178">&quot;birth.child.child-view-group.childOccupation&quot;</span><span style="color:#cccccc">,</span>
              <span style="color:#9cdcfe">&quot;custom&quot;</span><span style="color:#cccccc">:</span> <span style="color:#569cd6">true</span><span style="color:#cccccc">,</span>
              <span style="color:#9cdcfe">&quot;required&quot;</span><span style="color:#cccccc">:</span> <span style="color:#569cd6">false</span><span style="color:#cccccc">,</span>
              <span style="color:#9cdcfe">&quot;type&quot;</span><span style="color:#cccccc">:</span> <span style="color:#ce9178">&quot;TEXT&quot;</span><span style="color:#cccccc">,</span>
              <span style="color:#9cdcfe">&quot;label&quot;</span><span style="color:#cccccc">:</span> <span style="color:#da70d6">{</span>
                <span style="color:#9cdcfe">&quot;id&quot;</span><span style="color:#cccccc">:</span> <span style="color:#ce9178">&quot;form.customField.label.childOccupation&quot;</span><span style="color:#cccccc">,</span>
                <span style="color:#9cdcfe">&quot;description&quot;</span><span style="color:#cccccc">:</span> <span style="color:#ce9178">&quot;Custom field attribute&quot;</span><span style="color:#cccccc">,</span>
                <span style="color:#9cdcfe">&quot;defaultMessage&quot;</span><span style="color:#cccccc">:</span> <span style="color:#ce9178">&quot;childOccupation label&quot;</span>
              <span style="color:#da70d6">}</span><span style="color:#cccccc">,</span>
              <span style="color:#9cdcfe">&quot;initialValue&quot;</span><span style="color:#cccccc">:</span> <span style="color:#ce9178">&quot;&quot;</span><span style="color:#cccccc">,</span>
              <span style="color:#9cdcfe">&quot;validate&quot;</span><span style="color:#cccccc">:</span> <span style="color:#da70d6">[</span><span style="color:#da70d6">]</span><span style="color:#cccccc">,</span>
              <span style="color:#9cdcfe">&quot;options&quot;</span><span style="color:#cccccc">:</span> <span style="color:#da70d6">[</span><span style="color:#da70d6">]</span><span style="color:#cccccc">,</span>
              <span style="color:#9cdcfe">&quot;conditionals&quot;</span><span style="color:#cccccc">:</span> <span style="color:#da70d6">[</span>
                <span style="color:#179fff">{</span>
                  <span style="color:#9cdcfe">&quot;action&quot;</span><span style="color:#cccccc">:</span> <span style="color:#ce9178">&quot;hide&quot;</span><span style="color:#cccccc">,</span>
                  <span style="color:#9cdcfe">&quot;expression&quot;</span><span style="color:#cccccc">:</span> <span style="color:#ce9178">&quot;(values.attendantAtBirth!=\&quot;OTHER\&quot; &amp;&amp; values.attendantAtBirth!=\&quot;NONE\&quot;)&quot;</span>
                <span style="color:#179fff">}</span>
              <span style="color:#da70d6">]</span><span style="color:#cccccc">,</span>
              <span style="color:#9cdcfe">&quot;mapping&quot;</span><span style="color:#cccccc">:</span> <span style="color:#da70d6">{</span>
                <span style="color:#9cdcfe">&quot;mutation&quot;</span><span style="color:#cccccc">:</span> <span style="color:#179fff">{</span>
                  <span style="color:#9cdcfe">&quot;operation&quot;</span><span style="color:#cccccc">:</span> <span style="color:#ce9178">&quot;customFieldToQuestionnaireTransformer&quot;</span>
                <span style="color:#179fff">}</span><span style="color:#cccccc">,</span>
                <span style="color:#9cdcfe">&quot;query&quot;</span><span style="color:#cccccc">:</span> <span style="color:#179fff">{</span>
                  <span style="color:#9cdcfe">&quot;operation&quot;</span><span style="color:#cccccc">:</span> <span style="color:#ce9178">&quot;questionnaireToCustomFieldTransformer&quot;</span>
                <span style="color:#179fff">}</span><span style="color:#cccccc">,</span>
                <span style="color:#9cdcfe">&quot;template&quot;</span><span style="color:#cccccc">:</span> <span style="color:#179fff">{</span>
                  <span style="color:#9cdcfe">&quot;fieldName&quot;</span><span style="color:#cccccc">:</span> <span style="color:#ce9178">&quot;childOccupationTemplate&quot;</span><span style="color:#cccccc">,</span>
                  <span style="color:#9cdcfe">&quot;operation&quot;</span><span style="color:#cccccc">:</span> <span style="color:#ce9178">&quot;questionnaireToCustomFieldTransformer&quot;</span>
                <span style="color:#179fff">}</span>
              <span style="color:#da70d6">}</span><span style="color:#cccccc">,</span>
              <span style="color:#9cdcfe">&quot;maxLength&quot;</span><span style="color:#cccccc">:</span> <span style="color:#b5cea8">250</span>
            <span style="color:#ffd700">}</span><span style="color:#cccccc">,</span>
            <span style="color:#ffd700">{</span>
              <span style="color:#9cdcfe">&quot;name&quot;</span><span style="color:#cccccc">:</span> <span style="color:#ce9178">&quot;hospitalName&quot;</span><span style="color:#cccccc">,</span>
              <span style="color:#9cdcfe">&quot;customQuesstionMappingId&quot;</span><span style="color:#cccccc">:</span> <span style="color:#ce9178">&quot;birth.child.child-view-group.hospitalName&quot;</span><span style="color:#cccccc">,</span>
              <span style="color:#9cdcfe">&quot;custom&quot;</span><span style="color:#cccccc">:</span> <span style="color:#569cd6">true</span><span style="color:#cccccc">,</span>
              <span style="color:#9cdcfe">&quot;required&quot;</span><span style="color:#cccccc">:</span> <span style="color:#569cd6">false</span><span style="color:#cccccc">,</span>
              <span style="color:#9cdcfe">&quot;type&quot;</span><span style="color:#cccccc">:</span> <span style="color:#ce9178">&quot;TEXT&quot;</span><span style="color:#cccccc">,</span>
              <span style="color:#9cdcfe">&quot;label&quot;</span><span style="color:#cccccc">:</span> <span style="color:#da70d6">{</span>
                <span style="color:#9cdcfe">&quot;id&quot;</span><span style="color:#cccccc">:</span> <span style="color:#ce9178">&quot;form.customField.label.hospitalName&quot;</span><span style="color:#cccccc">,</span>
                <span style="color:#9cdcfe">&quot;description&quot;</span><span style="color:#cccccc">:</span> <span style="color:#ce9178">&quot;Custom field attribute&quot;</span><span style="color:#cccccc">,</span>
                <span style="color:#9cdcfe">&quot;defaultMessage&quot;</span><span style="color:#cccccc">:</span> <span style="color:#ce9178">&quot;hospitalName label&quot;</span>
              <span style="color:#da70d6">}</span><span style="color:#cccccc">,</span>
              <span style="color:#9cdcfe">&quot;initialValue&quot;</span><span style="color:#cccccc">:</span> <span style="color:#ce9178">&quot;&quot;</span><span style="color:#cccccc">,</span>
              <span style="color:#9cdcfe">&quot;validate&quot;</span><span style="color:#cccccc">:</span> <span style="color:#da70d6">[</span><span style="color:#da70d6">]</span><span style="color:#cccccc">,</span>
              <span style="color:#9cdcfe">&quot;options&quot;</span><span style="color:#cccccc">:</span> <span style="color:#da70d6">[</span><span style="color:#da70d6">]</span><span style="color:#cccccc">,</span>
              <span style="color:#9cdcfe">&quot;mapping&quot;</span><span style="color:#cccccc">:</span> <span style="color:#da70d6">{</span>
                <span style="color:#9cdcfe">&quot;mutation&quot;</span><span style="color:#cccccc">:</span> <span style="color:#179fff">{</span>
                  <span style="color:#9cdcfe">&quot;operation&quot;</span><span style="color:#cccccc">:</span> <span style="color:#ce9178">&quot;customFieldToQuestionnaireTransformer&quot;</span>
                <span style="color:#179fff">}</span><span style="color:#cccccc">,</span>
                <span style="color:#9cdcfe">&quot;query&quot;</span><span style="color:#cccccc">:</span> <span style="color:#179fff">{</span>
                  <span style="color:#9cdcfe">&quot;operation&quot;</span><span style="color:#cccccc">:</span> <span style="color:#ce9178">&quot;questionnaireToCustomFieldTransformer&quot;</span>
                <span style="color:#179fff">}</span><span style="color:#cccccc">,</span>
                <span style="color:#9cdcfe">&quot;template&quot;</span><span style="color:#cccccc">:</span> <span style="color:#179fff">{</span>
                  <span style="color:#9cdcfe">&quot;fieldName&quot;</span><span style="color:#cccccc">:</span> <span style="color:#ce9178">&quot;hospitalNameTemplate&quot;</span><span style="color:#cccccc">,</span>
                  <span style="color:#9cdcfe">&quot;operation&quot;</span><span style="color:#cccccc">:</span> <span style="color:#ce9178">&quot;questionnaireToCustomFieldTransformer&quot;</span>
                <span style="color:#179fff">}</span>
              <span style="color:#da70d6">}</span><span style="color:#cccccc">,</span>
              <span style="color:#9cdcfe">&quot;conditionals&quot;</span><span style="color:#cccccc">:</span> <span style="color:#da70d6">[</span><span style="color:#da70d6">]</span><span style="color:#cccccc">,</span>
              <span style="color:#9cdcfe">&quot;maxLength&quot;</span><span style="color:#cccccc">:</span> <span style="color:#b5cea8">250</span>
            <span style="color:#ffd700">}</span><span style="color:#cccccc">,</span>
            <span style="color:#ffd700">{</span>
              <span style="color:#9cdcfe">&quot;name&quot;</span><span style="color:#cccccc">:</span> <span style="color:#ce9178">&quot;reasonForLateRegistration&quot;</span><span style="color:#cccccc">,</span>
              <span style="color:#9cdcfe">&quot;customQuesstionMappingId&quot;</span><span style="color:#cccccc">:</span> <span style="color:#ce9178">&quot;birth.child.child-view-group.reasonForLateRegistration&quot;</span><span style="color:#cccccc">,</span>
              <span style="color:#9cdcfe">&quot;custom&quot;</span><span style="color:#cccccc">:</span> <span style="color:#569cd6">true</span><span style="color:#cccccc">,</span>
              <span style="color:#9cdcfe">&quot;required&quot;</span><span style="color:#cccccc">:</span> <span style="color:#569cd6">false</span><span style="color:#cccccc">,</span>
              <span style="color:#9cdcfe">&quot;type&quot;</span><span style="color:#cccccc">:</span> <span style="color:#ce9178">&quot;TEXT&quot;</span><span style="color:#cccccc">,</span>
              <span style="color:#9cdcfe">&quot;label&quot;</span><span style="color:#cccccc">:</span> <span style="color:#da70d6">{</span>
                <span style="color:#9cdcfe">&quot;id&quot;</span><span style="color:#cccccc">:</span> <span style="color:#ce9178">&quot;form.customField.label.reasonForLateRegistration&quot;</span><span style="color:#cccccc">,</span>
                <span style="color:#9cdcfe">&quot;description&quot;</span><span style="color:#cccccc">:</span> <span style="color:#ce9178">&quot;Custom field attribute&quot;</span><span style="color:#cccccc">,</span>
                <span style="color:#9cdcfe">&quot;defaultMessage&quot;</span><span style="color:#cccccc">:</span> <span style="color:#ce9178">&quot;reasonForLateRegistration label&quot;</span>
              <span style="color:#da70d6">}</span><span style="color:#cccccc">,</span>
              <span style="color:#9cdcfe">&quot;initialValue&quot;</span><span style="color:#cccccc">:</span> <span style="color:#ce9178">&quot;&quot;</span><span style="color:#cccccc">,</span>
              <span style="color:#9cdcfe">&quot;validate&quot;</span><span style="color:#cccccc">:</span> <span style="color:#da70d6">[</span><span style="color:#da70d6">]</span><span style="color:#cccccc">,</span>
              <span style="color:#9cdcfe">&quot;options&quot;</span><span style="color:#cccccc">:</span> <span style="color:#da70d6">[</span><span style="color:#da70d6">]</span><span style="color:#cccccc">,</span>
              <span style="color:#9cdcfe">&quot;conditionals&quot;</span><span style="color:#cccccc">:</span> <span style="color:#da70d6">[</span>
                <span style="color:#179fff">{</span>
                  <span style="color:#9cdcfe">&quot;action&quot;</span><span style="color:#cccccc">:</span> <span style="color:#ce9178">&quot;hide&quot;</span><span style="color:#cccccc">,</span>
                  <span style="color:#9cdcfe">&quot;expression&quot;</span><span style="color:#cccccc">:</span> <span style="color:#ce9178">&quot;(values.attendantAtBirth!=\&quot;OTHER\&quot; &amp;&amp; values.attendantAtBirth!=\&quot;NONE\&quot;)&quot;</span>
                <span style="color:#179fff">}</span>
              <span style="color:#da70d6">]</span><span style="color:#cccccc">,</span>
              <span style="color:#9cdcfe">&quot;mapping&quot;</span><span style="color:#cccccc">:</span> <span style="color:#da70d6">{</span>
                <span style="color:#9cdcfe">&quot;mutation&quot;</span><span style="color:#cccccc">:</span> <span style="color:#179fff">{</span>
                  <span style="color:#9cdcfe">&quot;operation&quot;</span><span style="color:#cccccc">:</span> <span style="color:#ce9178">&quot;customFieldToQuestionnaireTransformer&quot;</span>
                <span style="color:#179fff">}</span><span style="color:#cccccc">,</span>
                <span style="color:#9cdcfe">&quot;query&quot;</span><span style="color:#cccccc">:</span> <span style="color:#179fff">{</span>
                  <span style="color:#9cdcfe">&quot;operation&quot;</span><span style="color:#cccccc">:</span> <span style="color:#ce9178">&quot;questionnaireToCustomFieldTransformer&quot;</span>
                <span style="color:#179fff">}</span><span style="color:#cccccc">,</span>
                <span style="color:#9cdcfe">&quot;template&quot;</span><span style="color:#cccccc">:</span> <span style="color:#179fff">{</span>
                  <span style="color:#9cdcfe">&quot;fieldName&quot;</span><span style="color:#cccccc">:</span> <span style="color:#ce9178">&quot;reasonForLateRegistrationTemplate&quot;</span><span style="color:#cccccc">,</span>
                  <span style="color:#9cdcfe">&quot;operation&quot;</span><span style="color:#cccccc">:</span> <span style="color:#ce9178">&quot;questionnaireToCustomFieldTransformer&quot;</span>
                <span style="color:#179fff">}</span>
              <span style="color:#da70d6">}</span><span style="color:#cccccc">,</span>
              <span style="color:#9cdcfe">&quot;inputFieldWidth&quot;</span><span style="color:#cccccc">:</span> <span style="color:#ce9178">&quot;78px&quot;</span>
            <span style="color:#ffd700">}</span><span style="color:#cccccc">,</span>
            <span style="color:#ffd700">{</span>
              <span style="color:#9cdcfe">&quot;name&quot;</span><span style="color:#cccccc">:</span> <span style="color:#ce9178">&quot;childNationalIdNumber&quot;</span><span style="color:#cccccc">,</span>
              <span style="color:#9cdcfe">&quot;customQuesstionMappingId&quot;</span><span style="color:#cccccc">:</span> <span style="color:#ce9178">&quot;birth.child.child-view-group.childNationalIdNumber&quot;</span><span style="color:#cccccc">,</span>
              <span style="color:#9cdcfe">&quot;custom&quot;</span><span style="color:#cccccc">:</span> <span style="color:#569cd6">true</span><span style="color:#cccccc">,</span>
              <span style="color:#9cdcfe">&quot;required&quot;</span><span style="color:#cccccc">:</span> <span style="color:#569cd6">false</span><span style="color:#cccccc">,</span>
              <span style="color:#9cdcfe">&quot;type&quot;</span><span style="color:#cccccc">:</span> <span style="color:#ce9178">&quot;TEXT&quot;</span><span style="color:#cccccc">,</span>
              <span style="color:#9cdcfe">&quot;label&quot;</span><span style="color:#cccccc">:</span> <span style="color:#da70d6">{</span>
                <span style="color:#9cdcfe">&quot;id&quot;</span><span style="color:#cccccc">:</span> <span style="color:#ce9178">&quot;form.customField.label.childNationalIdNumber&quot;</span><span style="color:#cccccc">,</span>
                <span style="color:#9cdcfe">&quot;description&quot;</span><span style="color:#cccccc">:</span> <span style="color:#ce9178">&quot;Custom field attribute&quot;</span><span style="color:#cccccc">,</span>
                <span style="color:#9cdcfe">&quot;defaultMessage&quot;</span><span style="color:#cccccc">:</span> <span style="color:#ce9178">&quot;childNationalIdNumber label&quot;</span>
              <span style="color:#da70d6">}</span><span style="color:#cccccc">,</span>
              <span style="color:#9cdcfe">&quot;initialValue&quot;</span><span style="color:#cccccc">:</span> <span style="color:#ce9178">&quot;&quot;</span><span style="color:#cccccc">,</span>
              <span style="color:#9cdcfe">&quot;validate&quot;</span><span style="color:#cccccc">:</span> <span style="color:#da70d6">[</span><span style="color:#da70d6">]</span><span style="color:#cccccc">,</span>
              <span style="color:#9cdcfe">&quot;options&quot;</span><span style="color:#cccccc">:</span> <span style="color:#da70d6">[</span><span style="color:#da70d6">]</span><span style="color:#cccccc">,</span>
              <span style="color:#9cdcfe">&quot;mapping&quot;</span><span style="color:#cccccc">:</span> <span style="color:#da70d6">{</span>
                <span style="color:#9cdcfe">&quot;mutation&quot;</span><span style="color:#cccccc">:</span> <span style="color:#179fff">{</span>
                  <span style="color:#9cdcfe">&quot;operation&quot;</span><span style="color:#cccccc">:</span> <span style="color:#ce9178">&quot;customFieldToQuestionnaireTransformer&quot;</span>
                <span style="color:#179fff">}</span><span style="color:#cccccc">,</span>
                <span style="color:#9cdcfe">&quot;query&quot;</span><span style="color:#cccccc">:</span> <span style="color:#179fff">{</span>
                  <span style="color:#9cdcfe">&quot;operation&quot;</span><span style="color:#cccccc">:</span> <span style="color:#ce9178">&quot;questionnaireToCustomFieldTransformer&quot;</span>
                <span style="color:#179fff">}</span><span style="color:#cccccc">,</span>
                <span style="color:#9cdcfe">&quot;template&quot;</span><span style="color:#cccccc">:</span> <span style="color:#179fff">{</span>
                  <span style="color:#9cdcfe">&quot;fieldName&quot;</span><span style="color:#cccccc">:</span> <span style="color:#ce9178">&quot;childNationalIdNumberTemplate&quot;</span><span style="color:#cccccc">,</span>
                  <span style="color:#9cdcfe">&quot;operation&quot;</span><span style="color:#cccccc">:</span> <span style="color:#ce9178">&quot;questionnaireToCustomFieldTransformer&quot;</span>
                <span style="color:#179fff">}</span>
              <span style="color:#da70d6">}</span><span style="color:#cccccc">,</span>
              <span style="color:#9cdcfe">&quot;conditionals&quot;</span><span style="color:#cccccc">:</span> <span style="color:#da70d6">[</span><span style="color:#da70d6">]</span><span style="color:#cccccc">,</span>
              <span style="color:#9cdcfe">&quot;maxLength&quot;</span><span style="color:#cccccc">:</span> <span style="color:#b5cea8">250</span>
            <span style="color:#ffd700">}</span><span style="color:#cccccc">,</span>
            <span style="color:#ffd700">{</span>
              <span style="color:#9cdcfe">&quot;name&quot;</span><span style="color:#cccccc">:</span> <span style="color:#ce9178">&quot;informantAddressDetails&quot;</span><span style="color:#cccccc">,</span>
              <span style="color:#9cdcfe">&quot;customQuesstionMappingId&quot;</span><span style="color:#cccccc">:</span> <span style="color:#ce9178">&quot;birth.child.child-view-group.informantAddressDetails&quot;</span><span style="color:#cccccc">,</span>
              <span style="color:#9cdcfe">&quot;custom&quot;</span><span style="color:#cccccc">:</span> <span style="color:#569cd6">true</span><span style="color:#cccccc">,</span>
              <span style="color:#9cdcfe">&quot;required&quot;</span><span style="color:#cccccc">:</span> <span style="color:#569cd6">false</span><span style="color:#cccccc">,</span>
              <span style="color:#9cdcfe">&quot;type&quot;</span><span style="color:#cccccc">:</span> <span style="color:#ce9178">&quot;TEXT&quot;</span><span style="color:#cccccc">,</span>
              <span style="color:#9cdcfe">&quot;label&quot;</span><span style="color:#cccccc">:</span> <span style="color:#da70d6">{</span>
                <span style="color:#9cdcfe">&quot;id&quot;</span><span style="color:#cccccc">:</span> <span style="color:#ce9178">&quot;form.customField.label.informantAddressDetails&quot;</span><span style="color:#cccccc">,</span>
                <span style="color:#9cdcfe">&quot;description&quot;</span><span style="color:#cccccc">:</span> <span style="color:#ce9178">&quot;Custom field attribute&quot;</span><span style="color:#cccccc">,</span>
                <span style="color:#9cdcfe">&quot;defaultMessage&quot;</span><span style="color:#cccccc">:</span> <span style="color:#ce9178">&quot;informantAddressDetails label&quot;</span>
              <span style="color:#da70d6">}</span><span style="color:#cccccc">,</span>
              <span style="color:#9cdcfe">&quot;initialValue&quot;</span><span style="color:#cccccc">:</span> <span style="color:#ce9178">&quot;&quot;</span><span style="color:#cccccc">,</span>
              <span style="color:#9cdcfe">&quot;validate&quot;</span><span style="color:#cccccc">:</span> <span style="color:#da70d6">[</span><span style="color:#da70d6">]</span><span style="color:#cccccc">,</span>
              <span style="color:#9cdcfe">&quot;options&quot;</span><span style="color:#cccccc">:</span> <span style="color:#da70d6">[</span><span style="color:#da70d6">]</span><span style="color:#cccccc">,</span>
              <span style="color:#9cdcfe">&quot;conditionals&quot;</span><span style="color:#cccccc">:</span> <span style="color:#da70d6">[</span>
                <span style="color:#179fff">{</span>
                  <span style="color:#9cdcfe">&quot;action&quot;</span><span style="color:#cccccc">:</span> <span style="color:#ce9178">&quot;hide&quot;</span><span style="color:#cccccc">,</span>
                  <span style="color:#9cdcfe">&quot;expression&quot;</span><span style="color:#cccccc">:</span> <span style="color:#ce9178">&quot;(values.attendantAtBirth!=\&quot;OTHER\&quot; &amp;&amp; values.attendantAtBirth!=\&quot;NONE\&quot;)&quot;</span>
                <span style="color:#179fff">}</span>
              <span style="color:#da70d6">]</span><span style="color:#cccccc">,</span>
              <span style="color:#9cdcfe">&quot;mapping&quot;</span><span style="color:#cccccc">:</span> <span style="color:#da70d6">{</span>
                <span style="color:#9cdcfe">&quot;mutation&quot;</span><span style="color:#cccccc">:</span> <span style="color:#179fff">{</span>
                  <span style="color:#9cdcfe">&quot;operation&quot;</span><span style="color:#cccccc">:</span> <span style="color:#ce9178">&quot;customFieldToQuestionnaireTransformer&quot;</span>
                <span style="color:#179fff">}</span><span style="color:#cccccc">,</span>
                <span style="color:#9cdcfe">&quot;query&quot;</span><span style="color:#cccccc">:</span> <span style="color:#179fff">{</span>
                  <span style="color:#9cdcfe">&quot;operation&quot;</span><span style="color:#cccccc">:</span> <span style="color:#ce9178">&quot;questionnaireToCustomFieldTransformer&quot;</span>
                <span style="color:#179fff">}</span><span style="color:#cccccc">,</span>
                <span style="color:#9cdcfe">&quot;template&quot;</span><span style="color:#cccccc">:</span> <span style="color:#179fff">{</span>
                  <span style="color:#9cdcfe">&quot;fieldName&quot;</span><span style="color:#cccccc">:</span> <span style="color:#ce9178">&quot;informantAddressDetailsTemplate&quot;</span><span style="color:#cccccc">,</span>
                  <span style="color:#9cdcfe">&quot;operation&quot;</span><span style="color:#cccccc">:</span> <span style="color:#ce9178">&quot;questionnaireToCustomFieldTransformer&quot;</span>
                <span style="color:#179fff">}</span>
              <span style="color:#da70d6">}</span><span style="color:#cccccc">,</span>
              <span style="color:#9cdcfe">&quot;maxLength&quot;</span><span style="color:#cccccc">:</span> <span style="color:#b5cea8">250</span>
            <span style="color:#ffd700">}</span><span style="color:#cccccc">,</span>
            <span style="color:#ffd700">{</span>
              <span style="color:#9cdcfe">&quot;name&quot;</span><span style="color:#cccccc">:</span> <span style="color:#ce9178">&quot;fatherOccupationDetails&quot;</span><span style="color:#cccccc">,</span>
              <span style="color:#9cdcfe">&quot;customQuesstionMappingId&quot;</span><span style="color:#cccccc">:</span> <span style="color:#ce9178">&quot;birth.child.child-view-group.fatherOccupationDetails&quot;</span><span style="color:#cccccc">,</span>
              <span style="color:#9cdcfe">&quot;custom&quot;</span><span style="color:#cccccc">:</span> <span style="color:#569cd6">true</span><span style="color:#cccccc">,</span>
              <span style="color:#9cdcfe">&quot;required&quot;</span><span style="color:#cccccc">:</span> <span style="color:#569cd6">false</span><span style="color:#cccccc">,</span>
              <span style="color:#9cdcfe">&quot;type&quot;</span><span style="color:#cccccc">:</span> <span style="color:#ce9178">&quot;TEXT&quot;</span><span style="color:#cccccc">,</span>
              <span style="color:#9cdcfe">&quot;label&quot;</span><span style="color:#cccccc">:</span> <span style="color:#da70d6">{</span>
                <span style="color:#9cdcfe">&quot;id&quot;</span><span style="color:#cccccc">:</span> <span style="color:#ce9178">&quot;form.customField.label.fatherOccupationDetails&quot;</span><span style="color:#cccccc">,</span>
                <span style="color:#9cdcfe">&quot;description&quot;</span><span style="color:#cccccc">:</span> <span style="color:#ce9178">&quot;Custom field attribute&quot;</span><span style="color:#cccccc">,</span>
                <span style="color:#9cdcfe">&quot;defaultMessage&quot;</span><span style="color:#cccccc">:</span> <span style="color:#ce9178">&quot;fatherOccupationDetails label&quot;</span>
              <span style="color:#da70d6">}</span><span style="color:#cccccc">,</span>
              <span style="color:#9cdcfe">&quot;initialValue&quot;</span><span style="color:#cccccc">:</span> <span style="color:#ce9178">&quot;&quot;</span><span style="color:#cccccc">,</span>
              <span style="color:#9cdcfe">&quot;validate&quot;</span><span style="color:#cccccc">:</span> <span style="color:#da70d6">[</span><span style="color:#da70d6">]</span><span style="color:#cccccc">,</span>
              <span style="color:#9cdcfe">&quot;options&quot;</span><span style="color:#cccccc">:</span> <span style="color:#da70d6">[</span><span style="color:#da70d6">]</span><span style="color:#cccccc">,</span>
              <span style="color:#9cdcfe">&quot;mapping&quot;</span><span style="color:#cccccc">:</span> <span style="color:#da70d6">{</span>
                <span style="color:#9cdcfe">&quot;mutation&quot;</span><span style="color:#cccccc">:</span> <span style="color:#179fff">{</span>
                  <span style="color:#9cdcfe">&quot;operation&quot;</span><span style="color:#cccccc">:</span> <span style="color:#ce9178">&quot;customFieldToQuestionnaireTransformer&quot;</span>
                <span style="color:#179fff">}</span><span style="color:#cccccc">,</span>
                <span style="color:#9cdcfe">&quot;query&quot;</span><span style="color:#cccccc">:</span> <span style="color:#179fff">{</span>
                  <span style="color:#9cdcfe">&quot;operation&quot;</span><span style="color:#cccccc">:</span> <span style="color:#ce9178">&quot;questionnaireToCustomFieldTransformer&quot;</span>
                <span style="color:#179fff">}</span><span style="color:#cccccc">,</span>
                <span style="color:#9cdcfe">&quot;template&quot;</span><span style="color:#cccccc">:</span> <span style="color:#179fff">{</span>
                  <span style="color:#9cdcfe">&quot;fieldName&quot;</span><span style="color:#cccccc">:</span> <span style="color:#ce9178">&quot;fatherOccupationDetailsTemplate&quot;</span><span style="color:#cccccc">,</span>
                  <span style="color:#9cdcfe">&quot;operation&quot;</span><span style="color:#cccccc">:</span> <span style="color:#ce9178">&quot;questionnaireToCustomFieldTransformer&quot;</span>
                <span style="color:#179fff">}</span>
              <span style="color:#da70d6">}</span><span style="color:#cccccc">,</span>
              <span style="color:#9cdcfe">&quot;conditionals&quot;</span><span style="color:#cccccc">:</span> <span style="color:#da70d6">[</span><span style="color:#da70d6">]</span><span style="color:#cccccc">,</span>
              <span style="color:#9cdcfe">&quot;inputFieldWidth&quot;</span><span style="color:#cccccc">:</span> <span style="color:#ce9178">&quot;78px&quot;</span>
            <span style="color:#ffd700">}</span><span style="color:#cccccc">,</span>
            <span style="color:#ffd700">{</span>
              <span style="color:#9cdcfe">&quot;name&quot;</span><span style="color:#cccccc">:</span> <span style="color:#ce9178">&quot;motherOccupationDetails&quot;</span><span style="color:#cccccc">,</span>
              <span style="color:#9cdcfe">&quot;customQuesstionMappingId&quot;</span><span style="color:#cccccc">:</span> <span style="color:#ce9178">&quot;birth.child.child-view-group.motherOccupationDetails&quot;</span><span style="color:#cccccc">,</span>
              <span style="color:#9cdcfe">&quot;custom&quot;</span><span style="color:#cccccc">:</span> <span style="color:#569cd6">true</span><span style="color:#cccccc">,</span>
              <span style="color:#9cdcfe">&quot;required&quot;</span><span style="color:#cccccc">:</span> <span style="color:#569cd6">false</span><span style="color:#cccccc">,</span>
              <span style="color:#9cdcfe">&quot;type&quot;</span><span style="color:#cccccc">:</span> <span style="color:#ce9178">&quot;TEXT&quot;</span><span style="color:#cccccc">,</span>
              <span style="color:#9cdcfe">&quot;label&quot;</span><span style="color:#cccccc">:</span> <span style="color:#da70d6">{</span>
                <span style="color:#9cdcfe">&quot;id&quot;</span><span style="color:#cccccc">:</span> <span style="color:#ce9178">&quot;form.customField.label.motherOccupationDetails&quot;</span><span style="color:#cccccc">,</span>
                <span style="color:#9cdcfe">&quot;description&quot;</span><span style="color:#cccccc">:</span> <span style="color:#ce9178">&quot;Custom field attribute&quot;</span><span style="color:#cccccc">,</span>
                <span style="color:#9cdcfe">&quot;defaultMessage&quot;</span><span style="color:#cccccc">:</span> <span style="color:#ce9178">&quot;motherOccupationDetails label&quot;</span>
              <span style="color:#da70d6">}</span><span style="color:#cccccc">,</span>
              <span style="color:#9cdcfe">&quot;initialValue&quot;</span><span style="color:#cccccc">:</span> <span style="color:#ce9178">&quot;&quot;</span><span style="color:#cccccc">,</span>
              <span style="color:#9cdcfe">&quot;validate&quot;</span><span style="color:#cccccc">:</span> <span style="color:#da70d6">[</span><span style="color:#da70d6">]</span><span style="color:#cccccc">,</span>
              <span style="color:#9cdcfe">&quot;options&quot;</span><span style="color:#cccccc">:</span> <span style="color:#da70d6">[</span><span style="color:#da70d6">]</span><span style="color:#cccccc">,</span>
              <span style="color:#9cdcfe">&quot;conditionals&quot;</span><span style="color:#cccccc">:</span> <span style="color:#da70d6">[</span></div></div></div>
  <div class="abs" style="left:1133px;top:230px;width:42px;height:2px;background:#264f78"></div>
  <div class="abs" style="left:1194px;top:139.4px;width:1px;height:708px;background:#0e0e0e"></div>
  <div class="abs" style="left:1194px;top:139.4px;width:16px;height:1px;background:#141414"></div>
  <div class="abs" style="left:1195px;top:226.2px;width:14.5px;height:23.9px;background:#2e3034"></div>
  <div class="abs" style="left:1195px;top:227.8px;width:14.5px;height:2.3px;background:#a0a0a0"></div>
  <div class="abs" style="left:1200px;top:230.1px;width:5.9px;height:3.9px;background:#858585"></div>

  <div class="abs" style="left:56px;top:848px;width:41px;height:26px;background:#0078d4;border-bottom-left-radius:10px"></div>
<div style="position:absolute;left:522.74px;top:45.60px;font-family:'Liberation Sans',sans-serif;font-size:14.8px;line-height:16.53px;letter-spacing:0.277px;color:#cccccc;white-space:pre;-webkit-text-stroke:0.25px #cccccc;">birth.json — opencrvs-farajaland</div>
<div style="position:absolute;left:151.67px;top:85.20px;font-family:'Liberation Sans',sans-serif;font-size:15.8px;line-height:17.65px;letter-spacing:0.521px;color:#73c991;white-space:pre;-webkit-text-stroke:0.25px #73c991;">birth.json</div>
<div style="position:absolute;left:225.71px;top:86.08px;font-family:'Liberation Sans',sans-serif;font-size:14.6px;line-height:16.31px;letter-spacing:0.000px;color:#73c991;white-space:pre;-webkit-text-stroke:0.25px #73c991;-webkit-text-stroke:0.4px #73c991;">U</div>
<div style="position:absolute;left:132.43px;top:119.28px;font-family:'Liberation Sans',sans-serif;font-size:15.6px;line-height:17.43px;letter-spacing:0.966px;color:#a9a9a9;white-space:pre;-webkit-text-stroke:0.25px #a9a9a9;">src</div>
<div style="position:absolute;left:174.37px;top:119.28px;font-family:'Liberation Sans',sans-serif;font-size:15.6px;line-height:17.43px;letter-spacing:0.916px;color:#a9a9a9;white-space:pre;-webkit-text-stroke:0.25px #a9a9a9;">form</div>
<div style="position:absolute;left:226.79px;top:119.28px;font-family:'Liberation Sans',sans-serif;font-size:15.6px;line-height:17.43px;letter-spacing:1.171px;color:#a9a9a9;white-space:pre;-webkit-text-stroke:0.25px #a9a9a9;">birth</div>
<div style="position:absolute;left:306.19px;top:119.28px;font-family:'Liberation Sans',sans-serif;font-size:15.6px;line-height:17.43px;letter-spacing:0.708px;color:#a9a9a9;white-space:pre;-webkit-text-stroke:0.25px #a9a9a9;">birth.json</div>
<div style="position:absolute;left:417.13px;top:119.28px;font-family:'Liberation Sans',sans-serif;font-size:15.6px;line-height:17.43px;letter-spacing:0.595px;color:#a9a9a9;white-space:pre;-webkit-text-stroke:0.25px #a9a9a9;">sections</div>
<div style="position:absolute;left:518.43px;top:119.28px;font-family:'Liberation Sans',sans-serif;font-size:15.6px;line-height:17.43px;letter-spacing:0.000px;color:#a9a9a9;white-space:pre;-webkit-text-stroke:0.25px #a9a9a9;">1</div>
<div style="position:absolute;left:569.48px;top:119.28px;font-family:'Liberation Sans',sans-serif;font-size:15.6px;line-height:17.43px;letter-spacing:0.567px;color:#a9a9a9;white-space:pre;-webkit-text-stroke:0.25px #a9a9a9;">groups</div>
<div style="position:absolute;left:661.38px;top:119.28px;font-family:'Liberation Sans',sans-serif;font-size:15.6px;line-height:17.43px;letter-spacing:0.000px;color:#a9a9a9;white-space:pre;-webkit-text-stroke:0.25px #a9a9a9;">0</div>
<div style="position:absolute;left:713.27px;top:119.28px;font-family:'Liberation Sans',sans-serif;font-size:15.6px;line-height:17.43px;letter-spacing:0.851px;color:#a9a9a9;white-space:pre;-webkit-text-stroke:0.25px #a9a9a9;">fields</div>
<div style="position:absolute;left:795.30px;top:119.28px;font-family:'Liberation Sans',sans-serif;font-size:15.6px;line-height:17.43px;letter-spacing:0.000px;color:#a9a9a9;white-space:pre;-webkit-text-stroke:0.25px #a9a9a9;">8</div>
<div style="position:absolute;left:847.38px;top:119.28px;font-family:'Liberation Sans',sans-serif;font-size:15.6px;line-height:17.43px;letter-spacing:0.455px;color:#a9a9a9;white-space:pre;-webkit-text-stroke:0.25px #a9a9a9;">customQuesstionMappingId</div>
<div style="position:absolute;left:124.39px;top:852.34px;font-family:'Liberation Sans',sans-serif;font-size:15.2px;line-height:16.98px;letter-spacing:0.133px;color:#cccccc;white-space:pre;-webkit-text-stroke:0.25px #cccccc;">develop*</div>
<div style="position:absolute;left:282.79px;top:852.34px;font-family:'Liberation Sans',sans-serif;font-size:15.2px;line-height:16.98px;letter-spacing:0.000px;color:#cccccc;white-space:pre;-webkit-text-stroke:0.25px #cccccc;">0</div>
<div style="position:absolute;left:316.69px;top:852.34px;font-family:'Liberation Sans',sans-serif;font-size:15.2px;line-height:16.98px;letter-spacing:0.000px;color:#cccccc;white-space:pre;-webkit-text-stroke:0.25px #cccccc;">0</div>
<div style="position:absolute;left:365.28px;top:852.34px;font-family:'Liberation Sans',sans-serif;font-size:15.2px;line-height:16.98px;letter-spacing:-0.106px;color:#cccccc;white-space:pre;-webkit-text-stroke:0.25px #cccccc;">Live Share</div>
<div style="position:absolute;left:455.11px;top:852.34px;font-family:'Liberation Sans',sans-serif;font-size:15.2px;line-height:16.98px;letter-spacing:0.183px;color:#cccccc;white-space:pre;-webkit-text-stroke:0.25px #cccccc;">mwanga-staging</div>
<div style="position:absolute;left:588.19px;top:852.34px;font-family:'Liberation Sans',sans-serif;font-size:15.2px;line-height:16.98px;letter-spacing:0.181px;color:#cccccc;white-space:pre;-webkit-text-stroke:0.25px #cccccc;">default</div>
<div style="position:absolute;left:676.22px;top:852.34px;font-family:'Liberation Sans',sans-serif;font-size:15.2px;line-height:16.98px;letter-spacing:-0.005px;color:#cccccc;white-space:pre;-webkit-text-stroke:0.25px #cccccc;">Watch</div>
<div style="position:absolute;left:750.62px;top:852.34px;font-family:'Liberation Sans',sans-serif;font-size:15.2px;line-height:16.98px;letter-spacing:-0.052px;color:#cccccc;white-space:pre;-webkit-text-stroke:0.25px #cccccc;">Spaces: 2</div>
<div style="position:absolute;left:837.06px;top:852.34px;font-family:'Liberation Sans',sans-serif;font-size:15.2px;line-height:16.98px;letter-spacing:0.308px;color:#cccccc;white-space:pre;-webkit-text-stroke:0.25px #cccccc;">UTF-8</div>
<div style="position:absolute;left:899.58px;top:852.34px;font-family:'Liberation Sans',sans-serif;font-size:15.2px;line-height:16.98px;letter-spacing:-0.484px;color:#cccccc;white-space:pre;-webkit-text-stroke:0.25px #cccccc;">LF</div>
<div style="position:absolute;left:957.87px;top:852.34px;font-family:'Liberation Sans',sans-serif;font-size:15.2px;line-height:16.98px;letter-spacing:-0.488px;color:#cccccc;white-space:pre;-webkit-text-stroke:0.25px #cccccc;">JSON</div>
<div style="position:absolute;left:1069.68px;top:852.34px;font-family:'Liberation Sans',sans-serif;font-size:15.2px;line-height:16.98px;letter-spacing:0.229px;color:#cccccc;white-space:pre;-webkit-text-stroke:0.25px #cccccc;">Prettier</div>
<svg width="1266" height="948" style="left:0;top:0;position:absolute">
<g fill="none" stroke="#868686" stroke-width="1.9" stroke-linecap="round" stroke-linejoin="round">
  <!-- explorer -->
  <path d="M82.2 86.6 H90.6 L95.4 91.4 V103.5 Q95.4 105.1 93.8 105.1 H82.2 Q80.6 105.1 80.6 103.5 V88.2 Q80.6 86.6 82.2 86.6 Z"/>
  <path d="M90.4 86.8 V91.4 H95.2"/>
  <path d="M80.6 93.3 H74.6 Q73 93.3 73 94.9 V110.8 Q73 112.4 74.6 112.4 H86.9 Q88.5 112.4 88.5 110.8 V105.1"/>
  <!-- search -->
  <circle cx="88.8" cy="152.9" r="8.9"/>
  <path d="M82.6 159.6 L72.8 170.3"/>
  <!-- scm -->
  <circle cx="78.5" cy="204.3" r="3.5"/>
  <circle cx="91.2" cy="210" r="3.5"/>
  <circle cx="78.5" cy="224.4" r="3.5"/>
  <path d="M78.5 207.8 V220.9"/>
  <path d="M78.5 220.6 C78.5 217.5 81 216.8 84.5 216.8 C88.5 216.8 91.2 215.8 91.2 213.5"/>
  <!-- debug -->
  <path d="M80.6 271.4 V258.8 L98.3 270.6 L86.9 277.7"/>
  <ellipse cx="77.7" cy="281" rx="4.6" ry="5.8"/>
  <path d="M73.3 277.3 H82.1"/>
  <path d="M71 275.3 L73.4 277 M84.4 275.3 L82 277 M70.6 280.8 H73.1 M84.8 280.8 H82.3 M71.3 286.2 L73.5 284 M84.1 286.2 L81.9 284"/>
  <!-- remote explorer -->
  <path d="M82.3 336.9 H72.6 Q72.2 336.9 72.2 336.5 V319.3 Q72.2 318.9 72.6 318.9 H96 Q96.4 318.9 96.4 319.3 V328.1"/>
  <path d="M77.6 341.2 H83.6"/>
  <circle cx="91.8" cy="336.6" r="6.9"/>
  <path d="M88.9 335 L91.3 337.4 L89.2 339.6 M94.6 334.2 L92.8 335.9 L95.3 337.9" stroke-width="1.4"/>
  <!-- extensions -->
  <path d="M71.9 390 V380.9 Q71.9 379.8 73 379.8 H80.3 Q81.4 379.8 81.4 380.9 V390 Z"/>
  <path d="M71.9 390 V399.2 Q71.9 400.3 73 400.3 H92.6 V390 H71.9 M81.4 390 V400.3"/>
  <rect x="88.2" y="374.5" width="9.6" height="9.8" rx="1.6"/>
  <!-- gitlens -->
  <path d="M91.5 457.7 A13 13 0 1 1 98 446" stroke-width="1.6"/>
  <path d="M82.2 438.6 V452.6 M82.5 438.6 L90 444.2" stroke-width="1.6"/>
  <circle cx="92" cy="452.8" r="5.4" stroke-width="2.6"/>
  <!-- account -->
  <circle cx="85" cy="760.6" r="13.3"/>
  <circle cx="85" cy="757.4" r="5"/>
  <path d="M77.4 770.8 Q80 764.3 85 764.3 Q90 764.3 92.6 770.8"/>
  <!-- gear -->
  <path d="M81.64 810.44 L82.67 805.18 L87.03 805.18 L88.06 810.44 L92.52 807.45 L95.60 810.53 L92.61 814.99 L97.87 816.02 L97.87 820.38 L92.61 821.41 L95.60 825.87 L92.52 828.95 L88.06 825.96 L87.03 831.22 L82.67 831.22 L81.64 825.96 L77.18 828.95 L74.10 825.87 L77.09 821.41 L71.83 820.38 L71.83 816.02 L77.09 814.99 L74.10 810.53 L77.18 807.45 Z" stroke-width="1.9"/>
  <circle cx="84.85" cy="818.2" r="3.2" stroke-width="1.9"/>
</g>
<g fill="#868686">
  <circle cx="82.4" cy="438.6" r="2.4"/>
  <circle cx="82.2" cy="452.6" r="2.4"/>
  <circle cx="92" cy="452.8" r="2.4"/>
  <circle cx="76.6" cy="617" r="1.4"/><circle cx="85" cy="617" r="1.4"/><circle cx="93.4" cy="617" r="1.4"/>
  <!-- R logo -->
  <path fill-rule="evenodd" d="M85.3 492.3 C93.2 492.3 99.6 496.5 99.6 501.6 C99.6 504.6 97.5 507.2 94.2 508.9 L92.8 507.3 C95.4 506 97 504 97 501.8 C97 498.3 92.6 495.9 87.4 495.9 C81.8 495.9 77.3 498.6 77.3 501.8 C77.3 504 79.3 505.9 82.9 507.1 V510.4 C76 509.4 71 505.8 71 501.6 C71 496.5 77.4 492.3 85.3 492.3 Z"/>
  <path fill-rule="evenodd" d="M82.9 498 H92.5 C95.6 498 97.1 499.7 97.1 502 C97.1 503.9 96 505.2 94.4 505.8 L98.8 514 H94.2 L90.6 507.1 H88 V514 H82.9 Z M88 501 V504.5 H91.5 C92.6 504.5 93.1 503.8 93.1 502.8 C93.1 501.7 92.6 501 91.5 501 Z"/>
  <!-- docker -->
  <path d="M71 562.2 H93.3 C92.6 560.4 92.9 557.9 93.9 556 C95.3 557 96.1 558.4 96.3 559.6 C97.6 559.1 99.1 559.3 100 560.3 C99.1 561.7 97.4 562.4 95.9 562.3 C94.1 568 88.5 572.3 81.6 572.3 C75.4 572.3 71.3 569 71 562.2 Z"/>
  <rect x="73.2" y="558.1" width="2.9" height="3"/><rect x="77" y="558.1" width="2.9" height="3"/><rect x="80.9" y="558.1" width="2.9" height="3"/><rect x="84.7" y="558.1" width="2.9" height="3"/><rect x="88.4" y="558.1" width="2.9" height="3"/>
  <rect x="77" y="554.7" width="2.9" height="3"/><rect x="80.9" y="554.7" width="2.9" height="3"/><rect x="84.7" y="554.7" width="2.9" height="3"/>
  <rect x="84.7" y="551.3" width="2.9" height="3"/>
</g>
<!-- badges -->
<circle cx="94.5" cy="225.2" r="9.1" fill="#0078d4"/>
<circle cx="94.5" cy="397.5" r="9.1" fill="#0078d4"/>
<text x="94.5" y="229.4" fill="#fff" font-family="Liberation Sans" font-weight="bold" font-size="12" text-anchor="middle">7</text>
<text x="94.5" y="401.7" fill="#fff" font-family="Liberation Sans" font-weight="bold" font-size="12" text-anchor="middle">3</text>

<g fill="none" stroke="#cccccc" stroke-width="1.3" stroke-linecap="round" stroke-linejoin="round">
  <!-- title layout icons -->
  <rect x="1083.7" y="46.8" width="15.5" height="15.4" rx="2"/><path d="M1090.2 46.8 V62.2"/>
  <rect x="1114.9" y="46.8" width="15.5" height="15.4" rx="2"/><path d="M1114.9 57.6 H1130.4"/>
  <rect x="1146.5" y="46.8" width="15.3" height="15.4" rx="2"/><path d="M1155.6 46.8 V62.2"/>
  <rect x="1178.7" y="47.4" width="5.6" height="14.4" rx="1.6"/>
  <rect x="1188.1" y="47.4" width="5.6" height="4.9" rx="1.6"/>
  <rect x="1188.1" y="56.4" width="5.6" height="5.4" rx="1.6"/>
  <!-- tab bar actions -->
  <path d="M1082.4 88.2 A7.8 7.8 0 1 1 1082.3 96.6"/>
  <path d="M1081.3 85.1 V89.4 H1085.5"/>
  <path d="M1088.5 87.6 V91.8 L1092.3 95.5"/>
  <circle cx="1115" cy="86.8" r="2.4"/>
  <circle cx="1126" cy="98.9" r="2.4"/>
  <path d="M1115 89.2 V95 Q1115 98.9 1118.9 98.9 H1121.5 M1119.3 96.7 L1121.5 98.9 L1119.3 101.1"/>
  <path d="M1126 96.5 V90.5 Q1126 86.8 1122.5 86.8 H1120 M1122.1 84.6 L1119.9 86.8 L1122.1 89"/>
  <rect x="1144.8" y="84.7" width="15" height="15" rx="1.6"/><path d="M1152.3 84.7 V99.7"/>
  <!-- tab close -->
  <path d="M249.6 87.6 L258.6 96.6 M258.6 87.6 L249.6 96.6" stroke-width="1.4" stroke="#e6e6e6"/>
</g>
<g fill="#cccccc">
  <circle cx="1176.8" cy="92.3" r="1.2"/><circle cx="1182.9" cy="92.3" r="1.2"/><circle cx="1189" cy="92.3" r="1.2"/>
</g>
</svg>
<svg width="1266" height="948" style="left:0;top:0;position:absolute">
<g fill="none" stroke="#a9a9a9" stroke-width="1.25" stroke-linecap="round" stroke-linejoin="round">
  <!-- breadcrumb chevrons -->
  <path d="M162.3 121 L168.6 126.4 L162.3 131.8"/>
  <path d="M215.5 121 L221.8 126.4 L215.5 131.8"/>
  <path d="M268.3 121 L274.6 126.4 L268.3 131.8"/>
  <path d="M382.2 121 L388.5 126.4 L382.2 131.8"/>
  <path d="M485 121 L491.3 126.4 L485 131.8"/>
  <path d="M535.5 121 L541.8 126.4 L535.5 131.8"/>
  <path d="M627.9 121 L634.2 126.4 L627.9 131.8"/>
  <path d="M678.9 121 L685.2 126.4 L678.9 131.8"/>
  <path d="M761.8 121 L768.1 126.4 L761.8 131.8"/>
  <path d="M812.8 121 L819.1 126.4 L812.8 131.8"/>
  <!-- brackets [ ] -->
  <path d="M398.8 119.6 H396.4 V133.3 H398.8 M409.6 119.6 H412.1 V133.3 H409.6" stroke-width="1.4"/>
  <path d="M551.3 119.6 H548.9 V133.3 H551.3 M561.9 119.6 H564.4 V133.3 H561.9" stroke-width="1.4"/>
  <path d="M695 119.6 H692.6 V133.3 H695 M705.8 119.6 H708.3 V133.3 H705.8" stroke-width="1.4"/>
  <!-- braces {} gray -->
  <path d="M504 120.2 Q501.4 120.2 501.4 122.6 V124.8 Q501.4 126.4 499.9 126.4 Q501.4 126.4 501.4 128 V130.2 Q501.4 132.6 504 132.6 M509.8 120.2 Q512.4 120.2 512.4 122.6 V124.8 Q512.4 126.4 513.9 126.4 Q512.4 126.4 512.4 128 V130.2 Q512.4 132.6 509.8 132.6"/>
  <path d="M646.3 120.2 Q643.7 120.2 643.7 122.6 V124.8 Q643.7 126.4 642.2 126.4 Q643.7 126.4 643.7 128 V130.2 Q643.7 132.6 646.3 132.6 M652.1 120.2 Q654.7 120.2 654.7 122.6 V124.8 Q654.7 126.4 656.2 126.4 Q654.7 126.4 654.7 128 V130.2 Q654.7 132.6 652.1 132.6"/>
  <path d="M779.5 120.2 Q776.9 120.2 776.9 122.6 V124.8 Q776.9 126.4 775.4 126.4 Q776.9 126.4 776.9 128 V130.2 Q776.9 132.6 779.5 132.6 M785.3 120.2 Q787.9 120.2 787.9 122.6 V124.8 Q787.9 126.4 789.4 126.4 Q787.9 126.4 787.9 128 V130.2 Q787.9 132.6 785.3 132.6"/>
  <!-- abc box -->
  <rect x="827" y="119.9" width="15" height="11.9" rx="1.3"/>
</g>
<g fill="none" stroke="#cbcb41" stroke-width="1.4" stroke-linecap="round" stroke-linejoin="round">
  <path d="M290 120.2 Q287.4 120.2 287.4 122.6 V124.8 Q287.4 126.4 285.9 126.4 Q287.4 126.4 287.4 128 V130.2 Q287.4 132.6 290 132.6 M294.4 120.2 Q297 120.2 297 122.6 V124.8 Q297 126.4 298.5 126.4 Q297 126.4 297 128 V130.2 Q297 132.6 294.4 132.6"/>
  <path d="M135.2 85.8 Q132.6 85.8 132.6 88.2 V90.4 Q132.6 92 131.1 92 Q132.6 92 132.6 93.6 V95.8 Q132.6 98.2 135.2 98.2 M139.6 85.8 Q142.2 85.8 142.2 88.2 V90.4 Q142.2 92 143.7 92 Q142.2 92 142.2 93.6 V95.8 Q142.2 98.2 139.6 98.2"/>
</g>
<text x="834.5" y="128.6" fill="#a9a9a9" font-family="Liberation Sans" font-size="6.5" text-anchor="middle" font-weight="bold">abc</text>

<g fill="none" stroke="#ffffff" stroke-width="1.3" stroke-linecap="round" stroke-linejoin="round">
  <path d="M71.2 860.3 L76.2 863.5 L71.2 866.8 M81.6 856.4 L76.8 859.9 L81.6 863.3"/>
</g>
<g fill="none" stroke="#cccccc" stroke-width="1.2" stroke-linecap="round" stroke-linejoin="round">
  <!-- branch -->
  <circle cx="108.5" cy="854.5" r="1.9"/><circle cx="116.8" cy="857.4" r="1.9"/><circle cx="108.5" cy="866.3" r="1.9"/>
  <path d="M108.5 856.4 V864.4 M108.5 864 Q108.5 861.2 112 861.2 Q116.8 861.2 116.8 859.3"/>
  <!-- sync -->
  <path d="M196.2 856.6 A5.6 5.6 0 0 1 206.2 859.6 M205.2 866 A5.6 5.6 0 0 1 195.2 861.8"/>
  <path d="M204.5 858.2 L206.3 860.2 L208.3 858.4 M197 863.2 L195.2 861.3 L193.2 863"/>
  <!-- gitlens-like -->
  <circle cx="229.5" cy="855.8" r="1.9"/><circle cx="229.5" cy="865.3" r="1.9"/><circle cx="238.3" cy="859.8" r="1.9"/>
  <path d="M229.5 857.7 V863.4 M238.3 861.7 Q238.3 865.3 234.5 865.3"/>
  <path d="M234.1 853.3 V868.4" stroke-width="1.5"/>
  <!-- error -->
  <circle cx="270.2" cy="860.3" r="6.8"/>
  <path d="M267.4 857.6 L273.1 863.3 M273.1 857.6 L267.4 863.3"/>
  <!-- warning -->
  <path d="M304.4 853.6 L311.4 866.2 H297.4 Z"/>
  <path d="M304.4 859 V862.6"/>
  <!-- live share -->
  <path d="M347 862.5 Q348.5 856 355.8 856.4 V853.6 L361.4 857.6 L355.8 861.5 V858.8 Q350.5 858.6 347 862.5 Z"/>
  <circle cx="352.5" cy="865.5" r="2.3"/>
  <!-- watch -->
  <circle cx="662.7" cy="861.3" r="6.7"/>
  <!-- json -->
  <path d="M939.5 854.3 Q937.5 854.5 937.5 857 V859 Q937.5 860.2 936.2 860.6 Q937.5 861 937.5 862.3 V864.3 Q937.5 866.5 939.5 866.7"/>
  <path d="M944.5 854.5 Q946.4 854.8 946.4 857 V858.4 Q946.4 860 948.3 860.5"/>
  <!-- copilot crossed -->
  <path d="M1016.3 855.6 Q1021.2 853.4 1027.2 855.9"/>
  <circle cx="1025" cy="858.2" r="2.5"/>
  <path d="M1015.6 858.8 Q1013.3 861.5 1013.9 864.5 Q1015.5 868.3 1021.5 868.1 Q1025 867.9 1026.8 866.5"/>
  <path d="M1028.1 861.2 Q1029.5 862.6 1029.4 864.7"/>
  <path d="M1013.2 856.2 L1030 868.6" stroke="#181818" stroke-width="3.6"/>
  <path d="M1013.6 856.5 L1029.6 868.3" stroke-width="1.5"/>
  <!-- checks -->
  <path d="M1049.8 860.9 L1052.8 865.1 L1060.6 855.8 M1054.6 861.4 L1057.1 865.1 L1065.3 855.8"/>
  <!-- feedback -->
  <path d="M1144.4 855.5 V853.4 H1155.2 V859.8 H1152.3 L1150.6 861.8"/>
  <circle cx="1145.8" cy="859.6" r="2.7"/>
  <path d="M1140.6 867.4 Q1141.6 862.8 1145.8 862.8 Q1150 862.8 1150.9 867.4"/>
  <!-- bell -->
  <path d="M1185 853.6 Q1180 853.6 1180 858.6 V862.6 L1178.3 865.5 H1190 L1188.6 862.6 V860.5"/>
</g>
<g fill="#cccccc">
  <circle cx="304.4" cy="864.6" r="0.8"/>
  <circle cx="946.3" cy="864.8" r="3.2"/>
  <circle cx="1188.2" cy="856.3" r="3"/>
  <path d="M1181.8 866 H1185.6 L1183.7 867.8 Z"/>
</g>
<path d="M186.4 806.3 L191.6 811.4 L186.4 816.6" fill="none" stroke="#c5c5c5" stroke-width="1.3" stroke-linecap="round" stroke-linejoin="round"/>
</svg>

</div>
<div id="winborder"></div>
</body></html>
